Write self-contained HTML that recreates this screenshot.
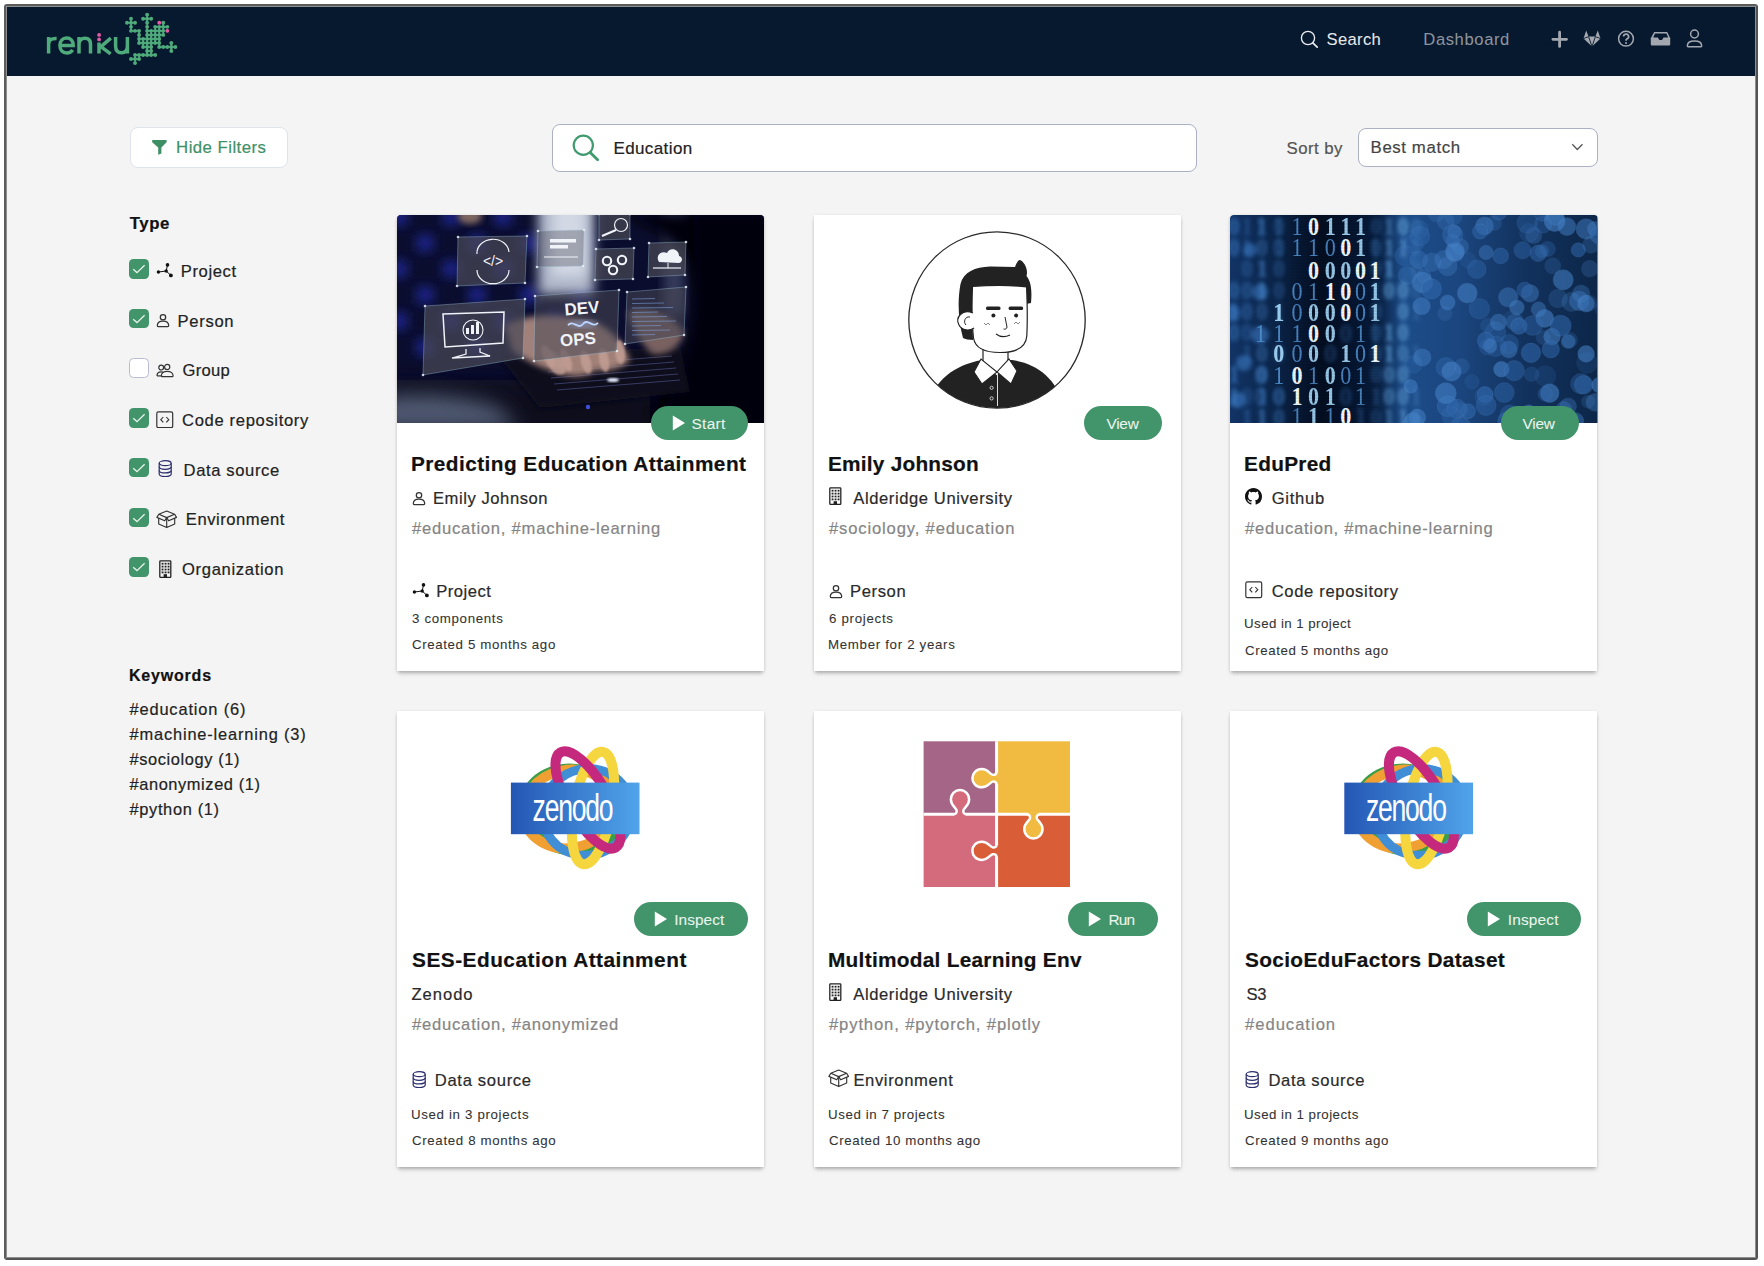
<!DOCTYPE html><html><head><meta charset="utf-8"><style>
*{box-sizing:border-box}
html,body{margin:0;padding:0;width:1764px;height:1266px;overflow:hidden;background:#fff;font-family:"Liberation Sans",sans-serif}
.t{position:absolute;white-space:nowrap;line-height:1;-webkit-text-stroke:0.2px currentColor}
.a{position:absolute;display:block}
.frame{position:absolute;left:4px;top:4px;width:1754px;height:1256px;border:2px solid #5c5c5c;border-right-color:#525252;border-bottom-color:#525252;border-radius:3px;background:#f4f4f4}
.inner{position:absolute;left:0;top:0;right:0;bottom:0;border:1px solid #8e8e8e}
.nav{position:absolute;left:7px;top:7px;width:1748px;height:69px;background:#07192e}
.card{position:absolute;width:367px;height:456px;background:#fff;box-shadow:0 3px 4px -1px rgba(0,0,0,0.30),0 0 3px rgba(0,0,0,0.07)}
.btn{position:absolute;height:34.2px;border-radius:17.1px;background:#42946a}
.cb{position:absolute;left:129px;width:19.5px;height:19.5px;border-radius:4.5px;background:#42946a}
.cbo{position:absolute;left:129px;width:19.5px;height:19.5px;border-radius:4.5px;background:#fff;border:1.3px solid #b9bdd0}
</style></head><body><div class="frame"><div class="inner"></div></div>
<div class="nav"></div>
<svg class="a" style="left:40px;top:8px" width="145" height="62" viewBox="40 8 145 62"><path d="M48.6 37 V53.6 M48.6 44.6 C48.6 40 51.5 38.2 56.6 38.4" fill="none" stroke="#4fab7b" stroke-width="3.5"/><path d="M60.2 45.4 H73.2 C73.2 40.6 70.4 38.1 66.6 38.1 C62.6 38.1 59.9 41.2 59.9 45.6 C59.9 50.2 62.8 52.9 66.8 52.9 C69.4 52.9 71.4 51.8 72.6 49.8" fill="none" stroke="#4fab7b" stroke-width="3.5"/><path d="M79.0 37 V53.6 M79.0 44.6 C79.0 40.2 81.6 38.2 84.9 38.2 C88.4 38.2 90.5 40.4 90.5 44.2 V53.6" fill="none" stroke="#4fab7b" stroke-width="3.5"/><path d="M99.0 42.6 V53.6 M110.8 38.2 L101.0 46.6 L110.6 53.8" fill="none" stroke="#4fab7b" stroke-width="3.5"/><path d="M115.6 37 V46.0 C115.6 50.4 117.9 52.8 121.4 52.8 C125.0 52.8 127.4 50.4 127.4 46.0 M127.4 37 V53.6" fill="none" stroke="#4fab7b" stroke-width="3.5"/><circle cx="99.1" cy="34.9" r="1.9" fill="#e65aa6"/><circle cx="99.1" cy="39.4" r="1.9" fill="#e65aa6"/><line x1="139.07" y1="30.86" x2="139.07" y2="34.89" stroke="#4fab7b" stroke-width="1.7"/><line x1="131.01" y1="26.83" x2="131.01" y2="30.86" stroke="#4fab7b" stroke-width="1.7"/><line x1="155.19" y1="26.83" x2="159.22" y2="26.83" stroke="#4fab7b" stroke-width="1.7"/><line x1="155.19" y1="26.83" x2="155.19" y2="30.86" stroke="#4fab7b" stroke-width="1.7"/><line x1="163.25" y1="30.86" x2="163.25" y2="34.89" stroke="#4fab7b" stroke-width="1.7"/><line x1="151.16" y1="30.86" x2="155.19" y2="30.86" stroke="#4fab7b" stroke-width="1.7"/><line x1="151.16" y1="30.86" x2="151.16" y2="34.89" stroke="#4fab7b" stroke-width="1.7"/><line x1="155.19" y1="34.89" x2="159.22" y2="34.89" stroke="#4fab7b" stroke-width="1.7"/><line x1="155.19" y1="34.89" x2="155.19" y2="38.92" stroke="#4fab7b" stroke-width="1.7"/><line x1="147.13" y1="51.01" x2="151.16" y2="51.01" stroke="#4fab7b" stroke-width="1.7"/><line x1="147.13" y1="51.01" x2="147.13" y2="55.04" stroke="#4fab7b" stroke-width="1.7"/><line x1="135.04" y1="59.07" x2="139.07" y2="59.07" stroke="#4fab7b" stroke-width="1.7"/><line x1="135.04" y1="59.07" x2="135.04" y2="63.10" stroke="#4fab7b" stroke-width="1.7"/><line x1="163.25" y1="46.98" x2="167.28" y2="46.98" stroke="#4fab7b" stroke-width="1.7"/><line x1="151.16" y1="55.04" x2="155.19" y2="55.04" stroke="#4fab7b" stroke-width="1.7"/><line x1="147.13" y1="14.74" x2="147.13" y2="18.77" stroke="#4fab7b" stroke-width="1.7"/><line x1="151.16" y1="46.98" x2="151.16" y2="51.01" stroke="#4fab7b" stroke-width="1.7"/><line x1="147.13" y1="22.80" x2="147.13" y2="26.83" stroke="#4fab7b" stroke-width="1.7"/><line x1="139.07" y1="55.04" x2="143.10" y2="55.04" stroke="#4fab7b" stroke-width="1.7"/><line x1="139.07" y1="55.04" x2="139.07" y2="59.07" stroke="#4fab7b" stroke-width="1.7"/><line x1="143.10" y1="42.95" x2="147.13" y2="42.95" stroke="#4fab7b" stroke-width="1.7"/><line x1="143.10" y1="42.95" x2="143.10" y2="46.98" stroke="#4fab7b" stroke-width="1.7"/><line x1="155.19" y1="42.95" x2="159.22" y2="42.95" stroke="#4fab7b" stroke-width="1.7"/><line x1="147.13" y1="38.92" x2="151.16" y2="38.92" stroke="#4fab7b" stroke-width="1.7"/><line x1="147.13" y1="38.92" x2="147.13" y2="42.95" stroke="#4fab7b" stroke-width="1.7"/><line x1="159.22" y1="38.92" x2="159.22" y2="42.95" stroke="#4fab7b" stroke-width="1.7"/><line x1="135.04" y1="30.86" x2="139.07" y2="30.86" stroke="#4fab7b" stroke-width="1.7"/><line x1="147.13" y1="30.86" x2="151.16" y2="30.86" stroke="#4fab7b" stroke-width="1.7"/><line x1="147.13" y1="30.86" x2="147.13" y2="34.89" stroke="#4fab7b" stroke-width="1.7"/><line x1="163.25" y1="26.83" x2="167.28" y2="26.83" stroke="#4fab7b" stroke-width="1.7"/><line x1="163.25" y1="26.83" x2="163.25" y2="30.86" stroke="#4fab7b" stroke-width="1.7"/><line x1="151.16" y1="34.89" x2="155.19" y2="34.89" stroke="#4fab7b" stroke-width="1.7"/><line x1="151.16" y1="34.89" x2="151.16" y2="38.92" stroke="#4fab7b" stroke-width="1.7"/><line x1="159.22" y1="30.86" x2="163.25" y2="30.86" stroke="#4fab7b" stroke-width="1.7"/><line x1="159.22" y1="30.86" x2="159.22" y2="34.89" stroke="#4fab7b" stroke-width="1.7"/><line x1="139.07" y1="34.89" x2="139.07" y2="38.92" stroke="#4fab7b" stroke-width="1.7"/><line x1="147.13" y1="46.98" x2="151.16" y2="46.98" stroke="#4fab7b" stroke-width="1.7"/><line x1="147.13" y1="46.98" x2="147.13" y2="51.01" stroke="#4fab7b" stroke-width="1.7"/><line x1="171.31" y1="46.98" x2="175.34" y2="46.98" stroke="#4fab7b" stroke-width="1.7"/><line x1="171.31" y1="46.98" x2="171.31" y2="51.01" stroke="#4fab7b" stroke-width="1.7"/><line x1="135.04" y1="55.04" x2="139.07" y2="55.04" stroke="#4fab7b" stroke-width="1.7"/><line x1="135.04" y1="55.04" x2="135.04" y2="59.07" stroke="#4fab7b" stroke-width="1.7"/><line x1="131.01" y1="59.07" x2="135.04" y2="59.07" stroke="#4fab7b" stroke-width="1.7"/><line x1="159.22" y1="46.98" x2="163.25" y2="46.98" stroke="#4fab7b" stroke-width="1.7"/><line x1="147.13" y1="55.04" x2="151.16" y2="55.04" stroke="#4fab7b" stroke-width="1.7"/><line x1="131.01" y1="22.80" x2="135.04" y2="22.80" stroke="#4fab7b" stroke-width="1.7"/><line x1="131.01" y1="22.80" x2="131.01" y2="26.83" stroke="#4fab7b" stroke-width="1.7"/><line x1="147.13" y1="18.77" x2="151.16" y2="18.77" stroke="#4fab7b" stroke-width="1.7"/><line x1="147.13" y1="18.77" x2="147.13" y2="22.80" stroke="#4fab7b" stroke-width="1.7"/><line x1="143.10" y1="38.92" x2="147.13" y2="38.92" stroke="#4fab7b" stroke-width="1.7"/><line x1="143.10" y1="38.92" x2="143.10" y2="42.95" stroke="#4fab7b" stroke-width="1.7"/><line x1="139.07" y1="42.95" x2="143.10" y2="42.95" stroke="#4fab7b" stroke-width="1.7"/><line x1="155.19" y1="38.92" x2="159.22" y2="38.92" stroke="#4fab7b" stroke-width="1.7"/><line x1="155.19" y1="38.92" x2="155.19" y2="42.95" stroke="#4fab7b" stroke-width="1.7"/><line x1="151.16" y1="42.95" x2="155.19" y2="42.95" stroke="#4fab7b" stroke-width="1.7"/><line x1="151.16" y1="42.95" x2="151.16" y2="46.98" stroke="#4fab7b" stroke-width="1.7"/><line x1="131.01" y1="30.86" x2="135.04" y2="30.86" stroke="#4fab7b" stroke-width="1.7"/><line x1="155.19" y1="30.86" x2="159.22" y2="30.86" stroke="#4fab7b" stroke-width="1.7"/><line x1="155.19" y1="30.86" x2="155.19" y2="34.89" stroke="#4fab7b" stroke-width="1.7"/><line x1="147.13" y1="26.83" x2="147.13" y2="30.86" stroke="#4fab7b" stroke-width="1.7"/><line x1="159.22" y1="26.83" x2="163.25" y2="26.83" stroke="#4fab7b" stroke-width="1.7"/><line x1="159.22" y1="26.83" x2="159.22" y2="30.86" stroke="#4fab7b" stroke-width="1.7"/><line x1="147.13" y1="34.89" x2="151.16" y2="34.89" stroke="#4fab7b" stroke-width="1.7"/><line x1="147.13" y1="34.89" x2="147.13" y2="38.92" stroke="#4fab7b" stroke-width="1.7"/><line x1="143.10" y1="46.98" x2="147.13" y2="46.98" stroke="#4fab7b" stroke-width="1.7"/><line x1="159.22" y1="34.89" x2="163.25" y2="34.89" stroke="#4fab7b" stroke-width="1.7"/><line x1="159.22" y1="34.89" x2="159.22" y2="38.92" stroke="#4fab7b" stroke-width="1.7"/><line x1="143.10" y1="55.04" x2="147.13" y2="55.04" stroke="#4fab7b" stroke-width="1.7"/><line x1="131.01" y1="18.77" x2="131.01" y2="22.80" stroke="#4fab7b" stroke-width="1.7"/><line x1="151.16" y1="51.01" x2="151.16" y2="55.04" stroke="#4fab7b" stroke-width="1.7"/><line x1="126.98" y1="22.80" x2="131.01" y2="22.80" stroke="#4fab7b" stroke-width="1.7"/><line x1="167.28" y1="46.98" x2="171.31" y2="46.98" stroke="#4fab7b" stroke-width="1.7"/><line x1="143.10" y1="18.77" x2="147.13" y2="18.77" stroke="#4fab7b" stroke-width="1.7"/><line x1="171.31" y1="42.95" x2="171.31" y2="46.98" stroke="#4fab7b" stroke-width="1.7"/><line x1="163.25" y1="22.80" x2="163.25" y2="26.83" stroke="#4fab7b" stroke-width="1.7"/><line x1="151.16" y1="38.92" x2="155.19" y2="38.92" stroke="#4fab7b" stroke-width="1.7"/><line x1="151.16" y1="38.92" x2="151.16" y2="42.95" stroke="#4fab7b" stroke-width="1.7"/><line x1="147.13" y1="42.95" x2="151.16" y2="42.95" stroke="#4fab7b" stroke-width="1.7"/><line x1="147.13" y1="42.95" x2="147.13" y2="46.98" stroke="#4fab7b" stroke-width="1.7"/><line x1="139.07" y1="38.92" x2="143.10" y2="38.92" stroke="#4fab7b" stroke-width="1.7"/><line x1="139.07" y1="38.92" x2="139.07" y2="42.95" stroke="#4fab7b" stroke-width="1.7"/><line x1="159.22" y1="42.95" x2="159.22" y2="46.98" stroke="#4fab7b" stroke-width="1.7"/><circle cx="139.07" cy="30.86" r="1.95" fill="#4fab7b"/><circle cx="131.01" cy="26.83" r="1.95" fill="#4fab7b"/><circle cx="155.19" cy="26.83" r="1.95" fill="#4fab7b"/><circle cx="163.25" cy="30.86" r="1.95" fill="#4fab7b"/><circle cx="151.16" cy="30.86" r="1.95" fill="#4fab7b"/><circle cx="167.28" cy="26.83" r="1.95" fill="#4fab7b"/><circle cx="155.19" cy="34.89" r="1.95" fill="#4fab7b"/><circle cx="147.13" cy="51.01" r="1.95" fill="#4fab7b"/><circle cx="135.04" cy="59.07" r="1.95" fill="#4fab7b"/><circle cx="163.25" cy="46.98" r="1.95" fill="#4fab7b"/><circle cx="151.16" cy="55.04" r="1.95" fill="#4fab7b"/><circle cx="147.13" cy="14.74" r="1.95" fill="#4fab7b"/><circle cx="135.04" cy="22.80" r="1.95" fill="#4fab7b"/><circle cx="151.16" cy="46.98" r="1.95" fill="#4fab7b"/><circle cx="151.16" cy="18.77" r="1.95" fill="#4fab7b"/><circle cx="175.34" cy="46.98" r="1.95" fill="#4fab7b"/><circle cx="147.13" cy="22.80" r="1.95" fill="#4fab7b"/><circle cx="171.31" cy="51.01" r="1.95" fill="#4fab7b"/><circle cx="139.07" cy="55.04" r="1.95" fill="#4fab7b"/><circle cx="159.22" cy="22.80" r="1.95" fill="#e65aa6"/><circle cx="143.10" cy="42.95" r="1.95" fill="#4fab7b"/><circle cx="155.19" cy="42.95" r="1.95" fill="#4fab7b"/><circle cx="147.13" cy="38.92" r="1.95" fill="#4fab7b"/><circle cx="159.22" cy="38.92" r="1.95" fill="#4fab7b"/><circle cx="135.04" cy="30.86" r="1.95" fill="#4fab7b"/><circle cx="147.13" cy="30.86" r="1.95" fill="#4fab7b"/><circle cx="163.25" cy="26.83" r="1.95" fill="#4fab7b"/><circle cx="151.16" cy="34.89" r="1.95" fill="#4fab7b"/><circle cx="159.22" cy="30.86" r="1.95" fill="#4fab7b"/><circle cx="139.07" cy="34.89" r="1.95" fill="#4fab7b"/><circle cx="163.25" cy="34.89" r="1.95" fill="#4fab7b"/><circle cx="147.13" cy="46.98" r="1.95" fill="#4fab7b"/><circle cx="171.31" cy="46.98" r="1.95" fill="#4fab7b"/><circle cx="135.04" cy="55.04" r="1.95" fill="#4fab7b"/><circle cx="131.01" cy="59.07" r="1.95" fill="#4fab7b"/><circle cx="159.22" cy="46.98" r="1.95" fill="#4fab7b"/><circle cx="147.13" cy="55.04" r="1.95" fill="#4fab7b"/><circle cx="131.01" cy="22.80" r="1.95" fill="#4fab7b"/><circle cx="147.13" cy="18.77" r="1.95" fill="#4fab7b"/><circle cx="143.10" cy="38.92" r="1.95" fill="#4fab7b"/><circle cx="139.07" cy="42.95" r="1.95" fill="#4fab7b"/><circle cx="155.19" cy="38.92" r="1.95" fill="#4fab7b"/><circle cx="151.16" cy="42.95" r="1.95" fill="#4fab7b"/><circle cx="135.04" cy="63.10" r="1.95" fill="#4fab7b"/><circle cx="131.01" cy="30.86" r="1.95" fill="#4fab7b"/><circle cx="155.19" cy="30.86" r="1.95" fill="#4fab7b"/><circle cx="147.13" cy="26.83" r="1.95" fill="#4fab7b"/><circle cx="167.28" cy="30.86" r="1.95" fill="#e65aa6"/><circle cx="159.22" cy="26.83" r="1.95" fill="#4fab7b"/><circle cx="147.13" cy="34.89" r="1.95" fill="#4fab7b"/><circle cx="143.10" cy="46.98" r="1.95" fill="#4fab7b"/><circle cx="159.22" cy="34.89" r="1.95" fill="#4fab7b"/><circle cx="143.10" cy="55.04" r="1.95" fill="#4fab7b"/><circle cx="131.01" cy="18.77" r="1.95" fill="#4fab7b"/><circle cx="151.16" cy="51.01" r="1.95" fill="#4fab7b"/><circle cx="126.98" cy="22.80" r="1.95" fill="#4fab7b"/><circle cx="167.28" cy="46.98" r="1.95" fill="#4fab7b"/><circle cx="143.10" cy="18.77" r="1.95" fill="#4fab7b"/><circle cx="171.31" cy="42.95" r="1.95" fill="#4fab7b"/><circle cx="155.19" cy="55.04" r="1.95" fill="#4fab7b"/><circle cx="163.25" cy="22.80" r="1.95" fill="#4fab7b"/><circle cx="139.07" cy="59.07" r="1.95" fill="#4fab7b"/><circle cx="151.16" cy="38.92" r="1.95" fill="#4fab7b"/><circle cx="147.13" cy="42.95" r="1.95" fill="#4fab7b"/><circle cx="139.07" cy="38.92" r="1.95" fill="#4fab7b"/><circle cx="159.22" cy="42.95" r="1.95" fill="#4fab7b"/></svg>
<svg class="a" style="left:1296px;top:27px" width="26" height="24" viewBox="0 0 26 24"><circle cx="12" cy="11" r="6.6" fill="none" stroke="#e9ebee" stroke-width="1.35"/><line x1="16.8" y1="15.8" x2="21.2" y2="20.2" stroke="#e9ebee" stroke-width="1.7" stroke-linecap="round"/></svg>
<div class="t" style="left:1326.50px;top:31.69px;font-size:16.6px;color:#e6e8eb;font-weight:400;letter-spacing:0.34px;-webkit-text-stroke:0.05px currentColor;">Search</div>
<div class="t" style="left:1423.30px;top:31.89px;font-size:16.6px;color:#8d949e;font-weight:400;letter-spacing:0.606px;-webkit-text-stroke:0.05px currentColor;">Dashboard</div>
<svg class="a" style="left:1550px;top:29px" width="20" height="20" viewBox="0 0 20 20"><path d="M9.6 3.2v14.2M2.9 10.3h13.6" stroke="#a3a8b0" stroke-width="2.8" stroke-linecap="round"/></svg>
<svg class="a" style="left:1582px;top:29px" width="20" height="20" viewBox="0 0 20 20"><path d="M4.2 1.5 L1.5 9.6 L10 17.6 L18.5 9.6 L15.8 1.5 L13.4 7.6 H6.6 Z" fill="#a3a8b0"/><path d="M6.6 7.6 L10 17.6 L13.4 7.6 M1.5 9.6 L6.6 7.6 M18.5 9.6 L13.4 7.6" stroke="#07192e" stroke-width="0.9" fill="none"/></svg>
<svg class="a" style="left:1616px;top:29px" width="20" height="20" viewBox="0 0 20 20"><circle cx="10" cy="9.7" r="7.4" fill="none" stroke="#a3a8b0" stroke-width="1.5"/><path d="M7.6 7.6 a2.5 2.5 0 1 1 3.6 2.2 c-0.9 0.5 -1.2 1 -1.2 1.9" fill="none" stroke="#a3a8b0" stroke-width="1.7"/><circle cx="10" cy="13.9" r="1.0" fill="#a3a8b0"/></svg>
<svg class="a" style="left:1650px;top:29px" width="22" height="20" viewBox="0 0 22 20"><path d="M4.2 3 H17.2 L20.2 9.2 V15.6 a0.8 0.8 0 0 1 -0.8 0.8 H1.6 a0.8 0.8 0 0 1 -0.8 -0.8 V9.2 Z" fill="#a3a8b0"/><path d="M5 4.6 H16.4 L18.2 8.6 H13.6 L12 11 H9.4 L7.8 8.6 H3.2 Z" fill="#07192e"/></svg>
<svg class="a" style="left:1685px;top:28px" width="20" height="21" viewBox="0 0 20 21"><circle cx="9.5" cy="6" r="3.9" fill="none" stroke="#a3a8b0" stroke-width="1.5"/><path d="M2.4 17.5 c0-3 2.8-4.6 7.1-4.6 s7.1 1.6 7.1 4.6 v0.6 a0.6 0.6 0 0 1 -0.6 0.6 H3 a0.6 0.6 0 0 1 -0.6 -0.6 Z" fill="none" stroke="#a3a8b0" stroke-width="1.5"/></svg>
<div class="a" style="left:129.5px;top:127px;width:158px;height:40.5px;background:#fff;border:1.2px solid #dfe3ec;border-radius:8px"></div>
<svg class="a" style="left:151px;top:139px" width="17" height="17" viewBox="0 0 17 17"><path d="M1.2 1 H15.6 V3.2 L10.4 8.6 V14.6 L7.2 15.8 V8.6 L1.2 3.2 Z" fill="#3f8f66"/></svg>
<div class="t" style="left:176.10px;top:140.02px;font-size:16.8px;color:#3f9167;font-weight:400;letter-spacing:0.448px;">Hide Filters</div>
<div class="a" style="left:552px;top:124px;width:645px;height:48px;background:#fff;border:1.5px solid #abb0c3;border-radius:8px"></div>
<svg class="a" style="left:568px;top:131px" width="36" height="34" viewBox="0 0 36 34"><circle cx="15.3" cy="14.3" r="9.6" fill="none" stroke="#3f9a6e" stroke-width="2.2"/><line x1="22.2" y1="21.4" x2="29.6" y2="28.8" stroke="#3f9a6e" stroke-width="2.8" stroke-linecap="round"/></svg>
<div class="t" style="left:613.40px;top:140.25px;font-size:17px;color:#222;font-weight:400;letter-spacing:0.4px;">Education</div>
<div class="t" style="left:1286.50px;top:140.62px;font-size:16.8px;color:#555;font-weight:400;letter-spacing:0.468px;">Sort by</div>
<div class="a" style="left:1357.5px;top:128px;width:240px;height:38.7px;background:#fff;border:1.3px solid #abb0c3;border-radius:8px"></div>
<div class="t" style="left:1370.60px;top:140.42px;font-size:16.8px;color:#444;font-weight:400;letter-spacing:0.607px;">Best match</div>
<svg class="a" style="left:1570px;top:141px" width="15" height="12" viewBox="0 0 15 12"><path d="M2.3 3.3 L7.3 8.5 L12.5 3.3" fill="none" stroke="#555" stroke-width="1.3"/></svg>
<div class="t" style="left:129.80px;top:216.32px;font-size:16.8px;color:#111;font-weight:700;letter-spacing:0.498px;">Type</div>
<div class="cb" style="top:259.00px"></div>
<svg class="a" style="left:129px;top:259.00px" width="20" height="20" viewBox="0 0 20 20"><path d="M4.2 10.2 L8 13.6 L15.6 6.2" fill="none" stroke="#e8f4ec" stroke-width="1.3"/></svg>
<svg class="a" style="left:156.30px;top:263.40px" width="18" height="15" viewBox="0 0 18 15"><path d="M2.4 9.0 L10.2 8.0 L11.5 1.9 M10.2 8.0 L14.9 12.4" stroke="#111" stroke-width="1.0" fill="none"/><circle cx="2.4" cy="9.0" r="1.7" fill="#111"/><circle cx="10.2" cy="8.0" r="1.7" fill="#111"/><circle cx="11.5" cy="1.9" r="1.8" fill="#111"/><circle cx="14.9" cy="12.4" r="1.9" fill="#111"/></svg>
<div class="t" style="left:180.80px;top:263.99px;font-size:16.6px;color:#222;font-weight:400;letter-spacing:0.602px;">Project</div>
<div class="cb" style="top:308.70px"></div>
<svg class="a" style="left:129px;top:308.70px" width="20" height="20" viewBox="0 0 20 20"><path d="M4.2 10.2 L8 13.6 L15.6 6.2" fill="none" stroke="#e8f4ec" stroke-width="1.3"/></svg>
<svg class="a" style="left:155.50px;top:312.80px" width="15" height="15" viewBox="0 0 15 15"><g transform="scale(1.0)"><circle cx="7" cy="4.2" r="2.7" fill="none" stroke="#333" stroke-width="1.25"/><path d="M1.3 12.6 c0-3 2.6-4.6 5.7-4.6 s5.7 1.6 5.7 4.6 c0 0.6-0.4 0.9-0.9 0.9 H2.2 c-0.5 0-0.9-0.3-0.9-0.9 Z" fill="none" stroke="#333" stroke-width="1.25"/></g></svg>
<div class="t" style="left:177.50px;top:313.69px;font-size:16.6px;color:#222;font-weight:400;letter-spacing:0.7px;">Person</div>
<div class="cbo" style="top:358.40px"></div>
<svg class="a" style="left:155.50px;top:362.50px" width="19" height="15" viewBox="0 0 19 15"><circle cx="5.2" cy="4.6" r="2.4" fill="none" stroke="#333" stroke-width="1.2"/><circle cx="11.2" cy="3.9" r="2.6" fill="none" stroke="#333" stroke-width="1.2"/><path d="M1.0 12.9 c0-2.4 1.6-4 4.2-4 c1.0 0 1.8 0.2 2.4 0.6" fill="none" stroke="#333" stroke-width="1.2"/><path d="M1.0 12.9 H6.2" stroke="#333" stroke-width="1.2"/><path d="M5.3 13.1 c0-3 2.6-4.8 5.9-4.8 s5.9 1.8 5.9 4.8 c0 0.3-0.2 0.5-0.5 0.5 H5.8 c-0.3 0-0.5-0.2-0.5-0.5 Z" fill="none" stroke="#333" stroke-width="1.2"/></svg>
<div class="t" style="left:182.50px;top:363.39px;font-size:16.6px;color:#222;font-weight:400;letter-spacing:0.3px;">Group</div>
<div class="cb" style="top:408.10px"></div>
<svg class="a" style="left:129px;top:408.10px" width="20" height="20" viewBox="0 0 20 20"><path d="M4.2 10.2 L8 13.6 L15.6 6.2" fill="none" stroke="#e8f4ec" stroke-width="1.3"/></svg>
<svg class="a" style="left:156.10px;top:410.95px" width="17.5" height="17.5" viewBox="0 0 17.5 17.5"><rect x="0.8" y="0.8" width="15.9" height="15.9" rx="1.6" fill="none" stroke="#333" stroke-width="1.2"/><path d="M7.3 6.0 L4.8 8.7 L7.3 11.4 M10.3 6.0 L12.8 8.7 L10.3 11.4" fill="none" stroke="#333" stroke-width="1.1"/></svg>
<div class="t" style="left:182.10px;top:413.09px;font-size:16.6px;color:#222;font-weight:400;letter-spacing:0.644px;">Code repository</div>
<div class="cb" style="top:457.80px"></div>
<svg class="a" style="left:129px;top:457.80px" width="20" height="20" viewBox="0 0 20 20"><path d="M4.2 10.2 L8 13.6 L15.6 6.2" fill="none" stroke="#e8f4ec" stroke-width="1.3"/></svg>
<svg class="a" style="left:158.00px;top:460.40px" width="15" height="18" viewBox="0 0 15 18"><ellipse cx="7.2" cy="3.2" rx="6.0" ry="2.5" fill="none" stroke="#2c2f6e" stroke-width="1.2"/><path d="M1.2 3.2 V14 c0 1.4 2.7 2.5 6 2.5 s6-1.1 6-2.5 V3.2" fill="none" stroke="#2c2f6e" stroke-width="1.2"/><path d="M1.2 6.8 c0 1.4 2.7 2.5 6 2.5 s6-1.1 6-2.5 M1.2 10.4 c0 1.4 2.7 2.5 6 2.5 s6-1.1 6-2.5" fill="none" stroke="#2c2f6e" stroke-width="1.2"/></svg>
<div class="t" style="left:183.60px;top:462.79px;font-size:16.6px;color:#222;font-weight:400;letter-spacing:0.62px;">Data source</div>
<div class="cb" style="top:507.50px"></div>
<svg class="a" style="left:129px;top:507.50px" width="20" height="20" viewBox="0 0 20 20"><path d="M4.2 10.2 L8 13.6 L15.6 6.2" fill="none" stroke="#e8f4ec" stroke-width="1.3"/></svg>
<svg class="a" style="left:156.20px;top:509.60px" width="22" height="19" viewBox="0 0 22 19"><path d="M10.7 1.0 L18.6 4.2 L10.7 7.6 L2.8 4.2 Z" fill="none" stroke="#333" stroke-width="1.15" stroke-linejoin="round"/><path d="M2.8 4.2 L0.9 7.4 L8.7 10.8 L10.7 7.6 L12.7 10.8 L20.5 7.4 L18.6 4.2" fill="none" stroke="#333" stroke-width="1.15" stroke-linejoin="round"/><path d="M2.7 8.2 V13.9 L10.7 17.6 L18.7 13.9 V8.2 M10.7 7.6 V17.6" fill="none" stroke="#333" stroke-width="1.15" stroke-linejoin="round"/></svg>
<div class="t" style="left:185.80px;top:512.49px;font-size:16.6px;color:#222;font-weight:400;letter-spacing:0.54px;">Environment</div>
<div class="cb" style="top:557.20px"></div>
<svg class="a" style="left:129px;top:557.20px" width="20" height="20" viewBox="0 0 20 20"><path d="M4.2 10.2 L8 13.6 L15.6 6.2" fill="none" stroke="#e8f4ec" stroke-width="1.3"/></svg>
<svg class="a" style="left:158.60px;top:559.80px" width="13" height="18" viewBox="0 0 13 18"><rect x="0.8" y="0.8" width="11" height="16.6" rx="0.8" fill="none" stroke="#222" stroke-width="1.3"/><rect x="2.6" y="2.8" width="1.9" height="1.8" fill="#222"/><rect x="2.6" y="5.7" width="1.9" height="1.8" fill="#222"/><rect x="2.6" y="8.6" width="1.9" height="1.8" fill="#222"/><rect x="2.6" y="11.5" width="1.9" height="1.8" fill="#222"/><rect x="5.6" y="2.8" width="1.9" height="1.8" fill="#222"/><rect x="5.6" y="5.7" width="1.9" height="1.8" fill="#222"/><rect x="5.6" y="8.6" width="1.9" height="1.8" fill="#222"/><rect x="5.6" y="11.5" width="1.9" height="1.8" fill="#222"/><rect x="8.6" y="2.8" width="1.9" height="1.8" fill="#222"/><rect x="8.6" y="5.7" width="1.9" height="1.8" fill="#222"/><rect x="8.6" y="8.6" width="1.9" height="1.8" fill="#222"/><rect x="8.6" y="11.5" width="1.9" height="1.8" fill="#222"/><rect x="4.6" y="14.2" width="3.4" height="3" fill="#222"/></svg>
<div class="t" style="left:182.00px;top:562.19px;font-size:16.6px;color:#222;font-weight:400;letter-spacing:0.663px;">Organization</div>
<div class="t" style="left:128.90px;top:668.20px;font-size:16.0px;color:#111;font-weight:700;letter-spacing:0.81px;">Keywords</div>
<div class="t" style="left:129.50px;top:700.86px;font-size:16.4px;color:#222;font-weight:400;letter-spacing:0.852px;">#education (6)</div>
<div class="t" style="left:129.50px;top:725.96px;font-size:16.4px;color:#222;font-weight:400;letter-spacing:0.84px;">#machine-learning (3)</div>
<div class="t" style="left:129.50px;top:751.06px;font-size:16.4px;color:#222;font-weight:400;letter-spacing:0.608px;">#sociology (1)</div>
<div class="t" style="left:129.50px;top:776.16px;font-size:16.4px;color:#222;font-weight:400;letter-spacing:0.598px;">#anonymized (1)</div>
<div class="t" style="left:129.50px;top:801.26px;font-size:16.4px;color:#222;font-weight:400;letter-spacing:0.66px;">#python (1)</div>
<div class="card" style="left:397px;top:215px"></div>
<svg class="a" style="left:397px;top:215px;border-radius:4px 4px 0 0" width="367" height="208" viewBox="397 215 367 208"><defs><filter id="b3" x="-20%" y="-20%" width="140%" height="140%"><feGaussianBlur stdDeviation="3"/></filter><filter id="b6" x="-30%" y="-30%" width="160%" height="160%"><feGaussianBlur stdDeviation="6"/></filter><filter id="b10" x="-50%" y="-50%" width="200%" height="200%"><feGaussianBlur stdDeviation="10"/></filter><filter id="b1" x="-10%" y="-10%" width="120%" height="120%"><feGaussianBlur stdDeviation="1.2"/></filter></defs><rect x="397" y="215" width="367" height="208" fill="#0b0d2e"/><g filter="url(#b6)"><rect x="391" y="209" width="16" height="16" fill="#1a2590"/><rect x="391" y="261" width="16" height="16" fill="#1a2590"/><rect x="391" y="313" width="16" height="16" fill="#1a2590"/><rect x="417" y="235" width="16" height="16" fill="#1a2590"/><rect x="417" y="287" width="16" height="16" fill="#1a2590"/><rect x="417" y="339" width="16" height="16" fill="#1a2590"/><rect x="443" y="209" width="16" height="16" fill="#1a2590"/><rect x="443" y="261" width="16" height="16" fill="#1a2590"/><rect x="443" y="313" width="16" height="16" fill="#1a2590"/><rect x="469" y="235" width="16" height="16" fill="#1a2590"/><rect x="469" y="287" width="16" height="16" fill="#1a2590"/><rect x="469" y="339" width="16" height="16" fill="#1a2590"/><rect x="495" y="209" width="16" height="16" fill="#1a2590"/><rect x="495" y="261" width="16" height="16" fill="#1a2590"/><rect x="495" y="313" width="16" height="16" fill="#1a2590"/><rect x="521" y="235" width="16" height="16" fill="#1a2590"/><rect x="521" y="287" width="16" height="16" fill="#1a2590"/><rect x="521" y="339" width="16" height="16" fill="#1a2590"/><rect x="547" y="209" width="16" height="16" fill="#1a2590"/><rect x="547" y="261" width="16" height="16" fill="#1a2590"/><rect x="547" y="313" width="16" height="16" fill="#1a2590"/><rect x="573" y="235" width="16" height="16" fill="#1a2590"/><rect x="573" y="287" width="16" height="16" fill="#1a2590"/><rect x="573" y="339" width="16" height="16" fill="#1a2590"/></g><ellipse cx="470" cy="216" rx="12" ry="8" fill="#a08070" filter="url(#b3)" opacity="0.8"/><rect x="538" y="200" width="56" height="95" fill="#aeb6c8" filter="url(#b6)"/><rect x="552" y="205" width="34" height="72" fill="#d2d8e4" filter="url(#b6)"/><rect x="664" y="205" width="20" height="110" fill="#4a5070" filter="url(#b6)" opacity="0.7"/><path d="M600 214 H764 V423 H600 C660 400 690 360 700 320 C705 280 690 240 620 214 Z" fill="#05060f" filter="url(#b6)"/><path d="M692 214 H770 V430 H640 C690 390 700 330 692 214 Z" fill="#020308" filter="url(#b6)"/><rect x="390" y="380" width="260" height="60" fill="#080a1c" filter="url(#b10)"/><path d="M380 398 C420 390 470 396 500 408 L520 430 H380 Z" fill="#4f5a72" filter="url(#b10)"/><path d="M500 358 L680 346 L690 392 L540 408 Z" fill="#0c0c1a" filter="url(#b3)"/><line x1="545" y1="366" x2="672" y2="356" stroke="#5a5f9a" stroke-width="1.1" opacity="0.55"/><line x1="548" y1="372" x2="674" y2="362" stroke="#5a5f9a" stroke-width="1.1" opacity="0.55"/><line x1="551" y1="378" x2="676" y2="368" stroke="#5a5f9a" stroke-width="1.1" opacity="0.55"/><line x1="554" y1="384" x2="678" y2="374" stroke="#5a5f9a" stroke-width="1.1" opacity="0.55"/><line x1="557" y1="390" x2="680" y2="380" stroke="#5a5f9a" stroke-width="1.1" opacity="0.55"/><ellipse cx="613" cy="380" rx="6" ry="2" fill="#e8ecff" filter="url(#b1)"/><g filter="url(#b3)" opacity="0.95"><path d="M505 325 C530 312 565 315 590 320 C608 326 622 340 630 360 C620 370 606 372 596 370 C585 378 570 378 556 372 C540 368 525 360 512 350 Z" fill="#a9877d"/><path d="M628 312 C650 305 672 314 684 332 C680 350 664 356 652 354 C642 344 634 332 628 312 Z" fill="#7f6663"/></g><ellipse cx="548" cy="356" rx="5" ry="12" fill="#c29e94" opacity="0.85" transform="rotate(-25 548 356)" filter="url(#b1)"/><ellipse cx="566" cy="360" rx="5" ry="12" fill="#c29e94" opacity="0.85" transform="rotate(-20 566 360)" filter="url(#b1)"/><ellipse cx="586" cy="362" rx="5" ry="12" fill="#c29e94" opacity="0.85" transform="rotate(-15 586 362)" filter="url(#b1)"/><ellipse cx="604" cy="360" rx="5" ry="12" fill="#c29e94" opacity="0.85" transform="rotate(-10 604 360)" filter="url(#b1)"/><ellipse cx="620" cy="352" rx="5" ry="12" fill="#c29e94" opacity="0.85" transform="rotate(-5 620 352)" filter="url(#b1)"/><path d="M548 350 C556 350 566 362 566 372 C560 378 552 374 548 364 Z" fill="#bf9d93" opacity="0.8" filter="url(#b1)"/><path d="M458.0 237.0 L527.0 236.0 L525.0 283.0 L457.0 286.0 Z" fill="#484856" fill-opacity="0.72" stroke="#9fc4d8" stroke-width="0.7" stroke-opacity="0.55"/><circle cx="458.0" cy="237.0" r="1.3" fill="#e6eef5" opacity="0.85"/><circle cx="527.0" cy="236.0" r="1.3" fill="#e6eef5" opacity="0.85"/><circle cx="525.0" cy="283.0" r="1.3" fill="#e6eef5" opacity="0.85"/><circle cx="457.0" cy="286.0" r="1.3" fill="#e6eef5" opacity="0.85"/><path d="M538.0 231.0 L584.0 230.0 L583.0 266.0 L537.0 267.0 Z" fill="#484856" fill-opacity="0.35" stroke="#9fc4d8" stroke-width="0.7" stroke-opacity="0.55"/><circle cx="538.0" cy="231.0" r="1.3" fill="#e6eef5" opacity="0.85"/><circle cx="584.0" cy="230.0" r="1.3" fill="#e6eef5" opacity="0.85"/><circle cx="583.0" cy="266.0" r="1.3" fill="#e6eef5" opacity="0.85"/><circle cx="537.0" cy="267.0" r="1.3" fill="#e6eef5" opacity="0.85"/><path d="M599.0 214.0 L630.0 214.0 L630.0 239.0 L599.0 240.0 Z" fill="#484856" fill-opacity="0.72" stroke="#9fc4d8" stroke-width="0.7" stroke-opacity="0.55"/><circle cx="599.0" cy="214.0" r="1.3" fill="#e6eef5" opacity="0.85"/><circle cx="630.0" cy="214.0" r="1.3" fill="#e6eef5" opacity="0.85"/><circle cx="630.0" cy="239.0" r="1.3" fill="#e6eef5" opacity="0.85"/><circle cx="599.0" cy="240.0" r="1.3" fill="#e6eef5" opacity="0.85"/><path d="M596.0 249.0 L634.0 248.0 L633.0 279.0 L595.0 280.0 Z" fill="#484856" fill-opacity="0.72" stroke="#9fc4d8" stroke-width="0.7" stroke-opacity="0.55"/><circle cx="596.0" cy="249.0" r="1.3" fill="#e6eef5" opacity="0.85"/><circle cx="634.0" cy="248.0" r="1.3" fill="#e6eef5" opacity="0.85"/><circle cx="633.0" cy="279.0" r="1.3" fill="#e6eef5" opacity="0.85"/><circle cx="595.0" cy="280.0" r="1.3" fill="#e6eef5" opacity="0.85"/><path d="M649.0 243.0 L686.0 242.0 L685.0 275.0 L648.0 277.0 Z" fill="#484856" fill-opacity="0.72" stroke="#9fc4d8" stroke-width="0.7" stroke-opacity="0.55"/><circle cx="649.0" cy="243.0" r="1.3" fill="#e6eef5" opacity="0.85"/><circle cx="686.0" cy="242.0" r="1.3" fill="#e6eef5" opacity="0.85"/><circle cx="685.0" cy="275.0" r="1.3" fill="#e6eef5" opacity="0.85"/><circle cx="648.0" cy="277.0" r="1.3" fill="#e6eef5" opacity="0.85"/><path d="M425.0 306.0 L525.0 299.0 L523.0 358.0 L423.0 375.0 Z" fill="#484856" fill-opacity="0.72" stroke="#9fc4d8" stroke-width="0.7" stroke-opacity="0.55"/><circle cx="425.0" cy="306.0" r="1.3" fill="#e6eef5" opacity="0.85"/><circle cx="525.0" cy="299.0" r="1.3" fill="#e6eef5" opacity="0.85"/><circle cx="523.0" cy="358.0" r="1.3" fill="#e6eef5" opacity="0.85"/><circle cx="423.0" cy="375.0" r="1.3" fill="#e6eef5" opacity="0.85"/><path d="M535.0 296.0 L619.0 290.0 L617.0 351.0 L534.0 361.0 Z" fill="#484856" fill-opacity="0.55" stroke="#9fc4d8" stroke-width="0.7" stroke-opacity="0.55"/><circle cx="535.0" cy="296.0" r="1.3" fill="#e6eef5" opacity="0.85"/><circle cx="619.0" cy="290.0" r="1.3" fill="#e6eef5" opacity="0.85"/><circle cx="617.0" cy="351.0" r="1.3" fill="#e6eef5" opacity="0.85"/><circle cx="534.0" cy="361.0" r="1.3" fill="#e6eef5" opacity="0.85"/><path d="M627.0 292.0 L686.0 287.0 L684.0 335.0 L625.0 344.0 Z" fill="#484856" fill-opacity="0.55" stroke="#9fc4d8" stroke-width="0.7" stroke-opacity="0.55"/><circle cx="627.0" cy="292.0" r="1.3" fill="#e6eef5" opacity="0.85"/><circle cx="686.0" cy="287.0" r="1.3" fill="#e6eef5" opacity="0.85"/><circle cx="684.0" cy="335.0" r="1.3" fill="#e6eef5" opacity="0.85"/><circle cx="625.0" cy="344.0" r="1.3" fill="#e6eef5" opacity="0.85"/><path d="M477 254 A14 12 0 0 1 509 252 M509 270 A14 12 0 0 1 477 270" fill="none" stroke="#f0f3f8" stroke-width="1.2"/><text x="493" y="266" font-family="Liberation Sans" font-size="14" fill="#f0f3f8" text-anchor="middle">&lt;/&gt;</text><rect x="550" y="239" width="26" height="3.5" fill="#f0f3f8"/><rect x="550" y="245" width="18" height="3.5" fill="#f0f3f8"/><line x1="544" y1="257" x2="578" y2="257" stroke="#f0f3f8" stroke-width="1"/><circle cx="621" cy="225" r="6.5" fill="none" stroke="#f0f3f8" stroke-width="1.2"/><line x1="616" y1="230" x2="602" y2="236" stroke="#f0f3f8" stroke-width="2"/><circle cx="607" cy="261" r="4.2" fill="none" stroke="#f0f3f8" stroke-width="2.1"/><circle cx="622" cy="260" r="4.2" fill="none" stroke="#f0f3f8" stroke-width="2.1"/><circle cx="613" cy="270" r="4.2" fill="none" stroke="#f0f3f8" stroke-width="2.1"/><path d="M659 262 C655 256 661 250 667 253 C669 247 679 248 679 256 C683 257 683 262 679 263 Z" fill="#f0f3f8"/><line x1="668" y1="263" x2="668" y2="268" stroke="#f0f3f8"/><line x1="653" y1="268" x2="681" y2="268" stroke="#f0f3f8" stroke-width="1.2"/><path d="M443 314 L504 312 L503 343 L445 347 Z" fill="none" stroke="#f0f3f8" stroke-width="1.5"/><circle cx="473" cy="330" r="10" fill="none" stroke="#f0f3f8" stroke-width="1.1"/><rect x="466" y="328" width="3" height="6" fill="#f0f3f8"/><rect x="471" y="325" width="3" height="9" fill="#f0f3f8"/><rect x="476" y="322" width="3" height="12" fill="#f0f3f8"/><path d="M466 349 L466 354 L452 358 L490 356 L480 352 L480 348" fill="none" stroke="#f0f3f8" stroke-width="1.3"/><text x="582" y="314" font-family="Liberation Sans" font-weight="700" font-size="17" fill="#f0f3f8" text-anchor="middle" transform="rotate(-5 582 310)">DEV</text><text x="578" y="345" font-family="Liberation Sans" font-weight="700" font-size="17" fill="#f0f3f8" text-anchor="middle" transform="rotate(-5 578 340)">OPS</text><path d="M568 324 c5 -6 10 6 15 0 c5 -6 10 6 15 0 c-5 6 -10 -6 -15 0 c-5 6 -10 -6 -15 0 Z" fill="none" stroke="#c7dcff" stroke-width="1.8" transform="rotate(-5 583 324)"/><ellipse cx="583" cy="324" rx="14" ry="3" fill="#9fc0ff" opacity="0.5" filter="url(#b3)"/><line x1="632" y1="299.0" x2="655" y2="298.5" stroke="#7fa8e8" stroke-width="0.9" opacity="0.6"/><line x1="632" y1="303.5" x2="664" y2="303.0" stroke="#7fa8e8" stroke-width="0.9" opacity="0.6"/><line x1="632" y1="308.0" x2="673" y2="307.5" stroke="#7fa8e8" stroke-width="0.9" opacity="0.6"/><line x1="632" y1="312.5" x2="658" y2="312.0" stroke="#7fa8e8" stroke-width="0.9" opacity="0.6"/><line x1="632" y1="317.0" x2="667" y2="316.5" stroke="#7fa8e8" stroke-width="0.9" opacity="0.6"/><line x1="632" y1="321.5" x2="676" y2="321.0" stroke="#7fa8e8" stroke-width="0.9" opacity="0.6"/><line x1="632" y1="326.0" x2="661" y2="325.5" stroke="#7fa8e8" stroke-width="0.9" opacity="0.6"/><line x1="632" y1="330.5" x2="670" y2="330.0" stroke="#7fa8e8" stroke-width="0.9" opacity="0.6"/><line x1="632" y1="335.0" x2="655" y2="334.5" stroke="#7fa8e8" stroke-width="0.9" opacity="0.6"/><circle cx="588" cy="407" r="2.2" fill="#4050d8"/></svg>
<div class="btn" style="left:651px;top:406px;width:97.0px"></div>
<svg class="a" style="left:672.2px;top:414px" width="14" height="18" viewBox="0 0 14 18"><path d="M0.8 1.6 L13 9 L0.8 16.4 Z" fill="#fff"/></svg>
<div class="t" style="left:691.50px;top:416.21px;font-size:15.4px;color:#eaf5ee;font-weight:400;letter-spacing:0.3px;-webkit-text-stroke:0.08px currentColor;">Start</div>
<div class="t" style="left:411.00px;top:454.22px;font-size:20.8px;color:#111;font-weight:700;letter-spacing:0.445px;">Predicting Education Attainment</div>
<svg class="a" style="left:411.50px;top:490.50px" width="15" height="15" viewBox="0 0 15 15"><g transform="scale(1.0)"><circle cx="7" cy="4.2" r="2.7" fill="none" stroke="#333" stroke-width="1.25"/><path d="M1.3 12.6 c0-3 2.6-4.6 5.7-4.6 s5.7 1.6 5.7 4.6 c0 0.6-0.4 0.9-0.9 0.9 H2.2 c-0.5 0-0.9-0.3-0.9-0.9 Z" fill="none" stroke="#333" stroke-width="1.25"/></g></svg>
<div class="t" style="left:433.00px;top:491.29px;font-size:16.6px;color:#2a2a2a;font-weight:400;letter-spacing:0.55px;">Emily Johnson</div>
<div class="t" style="left:412.00px;top:521.19px;font-size:16.6px;color:#858585;font-weight:400;letter-spacing:0.764px;">#education, #machine-learning</div>
<svg class="a" style="left:412.00px;top:582.80px" width="18" height="15" viewBox="0 0 18 15"><path d="M2.4 9.0 L10.2 8.0 L11.5 1.9 M10.2 8.0 L14.9 12.4" stroke="#111" stroke-width="1.0" fill="none"/><circle cx="2.4" cy="9.0" r="1.7" fill="#111"/><circle cx="10.2" cy="8.0" r="1.7" fill="#111"/><circle cx="11.5" cy="1.9" r="1.8" fill="#111"/><circle cx="14.9" cy="12.4" r="1.9" fill="#111"/></svg>
<div class="t" style="left:436.20px;top:583.89px;font-size:16.6px;color:#2a2a2a;font-weight:400;letter-spacing:0.498px;">Project</div>
<div class="t" style="left:412.00px;top:612.20px;font-size:13.3px;color:#333;font-weight:400;letter-spacing:0.664px;-webkit-text-stroke:0.08px currentColor;">3 components</div>
<div class="t" style="left:412.00px;top:638.20px;font-size:13.3px;color:#333;font-weight:400;letter-spacing:0.616px;-webkit-text-stroke:0.08px currentColor;">Created 5 months ago</div>
<div class="card" style="left:814px;top:215px"></div>
<svg class="a" style="left:900px;top:225px" width="195" height="195" viewBox="900 225 195 195"><defs><clipPath id="avc"><circle cx="997" cy="320" r="88"/></clipPath></defs><circle cx="997" cy="320" r="88.2" fill="#fff" stroke="#2a2a2a" stroke-width="1.3"/><g clip-path="url(#avc)"><path d="M925 420 C928 385 950 366 982 360 L1012 360 C1040 364 1062 382 1066 420 Z" fill="#222"/><path d="M983 348 V366 L997 376 L1008 366 V348 Z" fill="#fff" stroke="#222" stroke-width="1.2"/><path d="M981 359 L974 372 L982 384 L997 372 Z" fill="#fff" stroke="#222" stroke-width="1.1"/><path d="M1009 359 L1017 371 L1011 384 L997 372 Z" fill="#fff" stroke="#222" stroke-width="1.1"/><line x1="997.5" y1="373" x2="997.5" y2="406" stroke="#ddd" stroke-width="1"/><circle cx="991.6" cy="387.8" r="1.6" fill="none" stroke="#ddd" stroke-width="0.9"/><circle cx="991.6" cy="398.4" r="1.6" fill="none" stroke="#ddd" stroke-width="0.9"/></g><path d="M963 338 C958 320 957.5 300 960.5 284 C963.5 272 975 267 990 266.5 L1015 267 C1017 262 1019 258.5 1021 260.5 C1026 264 1028 271 1026.5 276 C1031.5 282 1032 292 1031 303 L1026 304 L972 304 L973 340 C969 340 965 339 963 338 Z" fill="#222"/><path d="M972.5 286.5 C990 285 1012 285 1026.6 287 C1027.2 302 1027.6 322 1026.8 336 C1026 347 1018 352.5 1000 352.5 C984 352.5 975 347 973.5 338 C971.8 322 971.8 302 972.5 286.5 Z" fill="#fff" stroke="#222" stroke-width="1.2"/><path d="M973 313 C962 308 955 318 959 325 C962 331 970 331 974 328" fill="#fff" stroke="#222" stroke-width="1.2"/><path d="M970 317 C965 316 963 322 966 325" fill="none" stroke="#222" stroke-width="1"/><rect x="986" y="306.5" width="14.5" height="3.4" rx="1.5" fill="#222"/><rect x="1008.6" y="306.5" width="14.5" height="3.4" rx="1.5" fill="#222"/><circle cx="993.4" cy="315.6" r="2" fill="#222"/><circle cx="1016.1" cy="315.6" r="2" fill="#222"/><path d="M1005 317 L1007 327 C1007 329 1005 329.5 1003.5 329" fill="none" stroke="#222" stroke-width="1"/><path d="M996 334 C1000 337 1005 337.5 1010 335" fill="none" stroke="#222" stroke-width="1.1"/><path d="M984 323 l2 2 l2 -2 l2 2 M1014 324 l2 -2 l2 2 l2 -2" fill="none" stroke="#555" stroke-width="0.7"/></svg>
<div class="btn" style="left:1084px;top:406px;width:78.4px"></div>
<div class="t" style="left:1106.40px;top:416.21px;font-size:15.4px;color:#eaf5ee;font-weight:400;letter-spacing:-0.235px;-webkit-text-stroke:0.08px currentColor;">View</div>
<div class="t" style="left:828.00px;top:454.22px;font-size:20.8px;color:#111;font-weight:700;letter-spacing:0.235px;">Emily Johnson</div>
<svg class="a" style="left:829.00px;top:487.30px" width="13" height="18" viewBox="0 0 13 18"><rect x="0.8" y="0.8" width="11" height="16.6" rx="0.8" fill="none" stroke="#222" stroke-width="1.3"/><rect x="2.6" y="2.8" width="1.9" height="1.8" fill="#222"/><rect x="2.6" y="5.7" width="1.9" height="1.8" fill="#222"/><rect x="2.6" y="8.6" width="1.9" height="1.8" fill="#222"/><rect x="2.6" y="11.5" width="1.9" height="1.8" fill="#222"/><rect x="5.6" y="2.8" width="1.9" height="1.8" fill="#222"/><rect x="5.6" y="5.7" width="1.9" height="1.8" fill="#222"/><rect x="5.6" y="8.6" width="1.9" height="1.8" fill="#222"/><rect x="5.6" y="11.5" width="1.9" height="1.8" fill="#222"/><rect x="8.6" y="2.8" width="1.9" height="1.8" fill="#222"/><rect x="8.6" y="5.7" width="1.9" height="1.8" fill="#222"/><rect x="8.6" y="8.6" width="1.9" height="1.8" fill="#222"/><rect x="8.6" y="11.5" width="1.9" height="1.8" fill="#222"/><rect x="4.6" y="14.2" width="3.4" height="3" fill="#222"/></svg>
<div class="t" style="left:853.30px;top:491.29px;font-size:16.6px;color:#2a2a2a;font-weight:400;letter-spacing:0.583px;">Alderidge University</div>
<div class="t" style="left:829.00px;top:521.19px;font-size:16.6px;color:#858585;font-weight:400;letter-spacing:0.847px;">#sociology, #education</div>
<svg class="a" style="left:828.50px;top:583.50px" width="15" height="15" viewBox="0 0 15 15"><g transform="scale(1.0)"><circle cx="7" cy="4.2" r="2.7" fill="none" stroke="#333" stroke-width="1.25"/><path d="M1.3 12.6 c0-3 2.6-4.6 5.7-4.6 s5.7 1.6 5.7 4.6 c0 0.6-0.4 0.9-0.9 0.9 H2.2 c-0.5 0-0.9-0.3-0.9-0.9 Z" fill="none" stroke="#333" stroke-width="1.25"/></g></svg>
<div class="t" style="left:850.00px;top:583.89px;font-size:16.6px;color:#2a2a2a;font-weight:400;letter-spacing:0.62px;">Person</div>
<div class="t" style="left:829.00px;top:611.70px;font-size:13.3px;color:#333;font-weight:400;letter-spacing:0.702px;-webkit-text-stroke:0.08px currentColor;">6 projects</div>
<div class="t" style="left:828.00px;top:637.80px;font-size:13.3px;color:#333;font-weight:400;letter-spacing:0.679px;-webkit-text-stroke:0.08px currentColor;">Member for 2 years</div>
<div class="card" style="left:1230px;top:215px"></div>
<svg class="a" style="left:1230px;top:215px;border-radius:4px 4px 0 0" width="367.5" height="208" viewBox="1230 215 367.5 208"><defs><linearGradient id="bnbg" x1="0" y1="0" x2="1" y2="0"><stop offset="0" stop-color="#123466"/><stop offset="0.12" stop-color="#0b2448"/><stop offset="0.25" stop-color="#040e22"/><stop offset="0.40" stop-color="#071c3c"/><stop offset="0.47" stop-color="#1c4c88"/><stop offset="0.62" stop-color="#1b467f"/><stop offset="0.8" stop-color="#12325e"/><stop offset="1" stop-color="#0c2648"/></linearGradient><filter id="bb2" x="-50%" y="-50%" width="200%" height="200%"><feGaussianBlur stdDeviation="2.2"/></filter><filter id="bb1" x="-50%" y="-50%" width="200%" height="200%"><feGaussianBlur stdDeviation="0.6"/></filter><filter id="bb4" x="-50%" y="-50%" width="200%" height="200%"><feGaussianBlur stdDeviation="4"/></filter></defs><rect x="1230" y="215" width="367.5" height="208" fill="url(#bnbg)"/><circle cx="1495.5" cy="332.0" r="10.2" fill="#2f66aa" opacity="0.39" stroke="#5a92d0" stroke-width="0.8" stroke-opacity="0.5"/><circle cx="1522.5" cy="250.3" r="8.5" fill="#2f66aa" opacity="0.45" stroke="#5a92d0" stroke-width="0.8" stroke-opacity="0.5"/><circle cx="1423.8" cy="276.1" r="6.9" fill="#2f66aa" opacity="0.52" stroke="#5a92d0" stroke-width="0.8" stroke-opacity="0.5"/><circle cx="1413.4" cy="424.1" r="10.4" fill="#2f66aa" opacity="0.46" stroke="#5a92d0" stroke-width="0.8" stroke-opacity="0.5"/><circle cx="1436.5" cy="213.3" r="8.6" fill="#4582c8" opacity="0.22" stroke="#5a92d0" stroke-width="0.8" stroke-opacity="0.5"/><circle cx="1453.4" cy="216.6" r="8.4" fill="#2f66aa" opacity="0.38" stroke="#5a92d0" stroke-width="0.8" stroke-opacity="0.5"/><circle cx="1508.8" cy="349.6" r="8.5" fill="#4582c8" opacity="0.46" stroke="#5a92d0" stroke-width="0.8" stroke-opacity="0.5"/><circle cx="1460.6" cy="427.5" r="10.5" fill="#2f66aa" opacity="0.54" stroke="#5a92d0" stroke-width="0.8" stroke-opacity="0.5"/><circle cx="1468.1" cy="260.1" r="7.7" fill="#2f66aa" opacity="0.23" stroke="#5a92d0" stroke-width="0.8" stroke-opacity="0.5"/><circle cx="1485.1" cy="394.6" r="8.0" fill="#2f66aa" opacity="0.58" stroke="#5a92d0" stroke-width="0.8" stroke-opacity="0.5"/><circle cx="1405.1" cy="255.7" r="10.1" fill="#2f66aa" opacity="0.39" stroke="#5a92d0" stroke-width="0.8" stroke-opacity="0.5"/><circle cx="1484.5" cy="225.9" r="9.0" fill="#4582c8" opacity="0.51" stroke="#5a92d0" stroke-width="0.8" stroke-opacity="0.5"/><circle cx="1422.4" cy="282.5" r="10.4" fill="#4582c8" opacity="0.50" stroke="#5a92d0" stroke-width="0.8" stroke-opacity="0.5"/><circle cx="1454.3" cy="232.0" r="6.7" fill="#4582c8" opacity="0.52" stroke="#5a92d0" stroke-width="0.8" stroke-opacity="0.5"/><circle cx="1516.9" cy="307.5" r="7.3" fill="#4582c8" opacity="0.49" stroke="#5a92d0" stroke-width="0.8" stroke-opacity="0.5"/><circle cx="1533.7" cy="235.4" r="8.2" fill="#4582c8" opacity="0.29" stroke="#5a92d0" stroke-width="0.8" stroke-opacity="0.5"/><circle cx="1599.2" cy="385.1" r="7.7" fill="#4582c8" opacity="0.55" stroke="#5a92d0" stroke-width="0.8" stroke-opacity="0.5"/><circle cx="1483.9" cy="396.3" r="9.1" fill="#2f66aa" opacity="0.24" stroke="#5a92d0" stroke-width="0.8" stroke-opacity="0.5"/><circle cx="1447.6" cy="266.3" r="9.6" fill="#4582c8" opacity="0.33" stroke="#5a92d0" stroke-width="0.8" stroke-opacity="0.5"/><circle cx="1419.7" cy="229.6" r="8.8" fill="#2f66aa" opacity="0.30" stroke="#5a92d0" stroke-width="0.8" stroke-opacity="0.5"/><circle cx="1479.3" cy="308.8" r="10.3" fill="#2f66aa" opacity="0.39" stroke="#5a92d0" stroke-width="0.8" stroke-opacity="0.5"/><circle cx="1578.3" cy="249.9" r="7.1" fill="#2f66aa" opacity="0.56" stroke="#5a92d0" stroke-width="0.8" stroke-opacity="0.5"/><circle cx="1454.9" cy="251.4" r="9.5" fill="#4582c8" opacity="0.58" stroke="#5a92d0" stroke-width="0.8" stroke-opacity="0.5"/><circle cx="1595.0" cy="402.3" r="8.9" fill="#4582c8" opacity="0.37" stroke="#5a92d0" stroke-width="0.8" stroke-opacity="0.5"/><circle cx="1412.7" cy="419.9" r="7.5" fill="#4582c8" opacity="0.48" stroke="#5a92d0" stroke-width="0.8" stroke-opacity="0.5"/><circle cx="1569.7" cy="340.0" r="7.7" fill="#2f66aa" opacity="0.27" stroke="#5a92d0" stroke-width="0.8" stroke-opacity="0.5"/><circle cx="1418.8" cy="259.8" r="8.7" fill="#2f66aa" opacity="0.54" stroke="#5a92d0" stroke-width="0.8" stroke-opacity="0.5"/><circle cx="1461.0" cy="410.0" r="7.3" fill="#4582c8" opacity="0.21" stroke="#5a92d0" stroke-width="0.8" stroke-opacity="0.5"/><circle cx="1494.1" cy="223.2" r="7.2" fill="#2f66aa" opacity="0.35" stroke="#5a92d0" stroke-width="0.8" stroke-opacity="0.5"/><circle cx="1431.3" cy="288.9" r="10.1" fill="#2f66aa" opacity="0.59" stroke="#5a92d0" stroke-width="0.8" stroke-opacity="0.5"/><circle cx="1543.2" cy="337.4" r="7.1" fill="#4582c8" opacity="0.21" stroke="#5a92d0" stroke-width="0.8" stroke-opacity="0.5"/><circle cx="1587.0" cy="362.8" r="10.4" fill="#2f66aa" opacity="0.21" stroke="#5a92d0" stroke-width="0.8" stroke-opacity="0.5"/><circle cx="1501.4" cy="369.2" r="7.8" fill="#4582c8" opacity="0.60" stroke="#5a92d0" stroke-width="0.8" stroke-opacity="0.5"/><circle cx="1514.2" cy="370.7" r="10.1" fill="#2f66aa" opacity="0.49" stroke="#5a92d0" stroke-width="0.8" stroke-opacity="0.5"/><circle cx="1563.7" cy="409.5" r="7.9" fill="#2f66aa" opacity="0.47" stroke="#5a92d0" stroke-width="0.8" stroke-opacity="0.5"/><circle cx="1579.2" cy="300.9" r="9.7" fill="#2f66aa" opacity="0.55" stroke="#5a92d0" stroke-width="0.8" stroke-opacity="0.5"/><circle cx="1530.0" cy="293.3" r="8.8" fill="#4582c8" opacity="0.44" stroke="#5a92d0" stroke-width="0.8" stroke-opacity="0.5"/><circle cx="1532.9" cy="426.5" r="10.0" fill="#4582c8" opacity="0.49" stroke="#5a92d0" stroke-width="0.8" stroke-opacity="0.5"/><circle cx="1552.0" cy="336.6" r="8.3" fill="#4582c8" opacity="0.54" stroke="#5a92d0" stroke-width="0.8" stroke-opacity="0.5"/><circle cx="1555.0" cy="216.5" r="8.9" fill="#4582c8" opacity="0.39" stroke="#5a92d0" stroke-width="0.8" stroke-opacity="0.5"/><circle cx="1544.7" cy="318.4" r="9.0" fill="#4582c8" opacity="0.57" stroke="#5a92d0" stroke-width="0.8" stroke-opacity="0.5"/><circle cx="1407.3" cy="275.6" r="9.2" fill="#4582c8" opacity="0.28" stroke="#5a92d0" stroke-width="0.8" stroke-opacity="0.5"/><circle cx="1586.1" cy="353.9" r="8.3" fill="#4582c8" opacity="0.56" stroke="#5a92d0" stroke-width="0.8" stroke-opacity="0.5"/><circle cx="1538.2" cy="253.3" r="8.2" fill="#2f66aa" opacity="0.52" stroke="#5a92d0" stroke-width="0.8" stroke-opacity="0.5"/><circle cx="1581.1" cy="293.8" r="8.8" fill="#4582c8" opacity="0.33" stroke="#5a92d0" stroke-width="0.8" stroke-opacity="0.5"/><circle cx="1504.3" cy="392.5" r="9.9" fill="#2f66aa" opacity="0.48" stroke="#5a92d0" stroke-width="0.8" stroke-opacity="0.5"/><circle cx="1460.4" cy="246.9" r="8.3" fill="#4582c8" opacity="0.31" stroke="#5a92d0" stroke-width="0.8" stroke-opacity="0.5"/><circle cx="1487.8" cy="346.4" r="8.5" fill="#2f66aa" opacity="0.33" stroke="#5a92d0" stroke-width="0.8" stroke-opacity="0.5"/><circle cx="1601.4" cy="308.6" r="6.8" fill="#2f66aa" opacity="0.21" stroke="#5a92d0" stroke-width="0.8" stroke-opacity="0.5"/><circle cx="1413.3" cy="364.5" r="8.8" fill="#2f66aa" opacity="0.32" stroke="#5a92d0" stroke-width="0.8" stroke-opacity="0.5"/><circle cx="1408.8" cy="239.6" r="8.3" fill="#2f66aa" opacity="0.21" stroke="#5a92d0" stroke-width="0.8" stroke-opacity="0.5"/><circle cx="1452.5" cy="240.7" r="6.7" fill="#4582c8" opacity="0.45" stroke="#5a92d0" stroke-width="0.8" stroke-opacity="0.5"/><circle cx="1531.0" cy="352.8" r="9.7" fill="#2f66aa" opacity="0.58" stroke="#5a92d0" stroke-width="0.8" stroke-opacity="0.5"/><circle cx="1444.9" cy="313.6" r="7.2" fill="#4582c8" opacity="0.20" stroke="#5a92d0" stroke-width="0.8" stroke-opacity="0.5"/><circle cx="1547.8" cy="249.0" r="7.6" fill="#2f66aa" opacity="0.34" stroke="#5a92d0" stroke-width="0.8" stroke-opacity="0.5"/><circle cx="1509.1" cy="343.9" r="9.5" fill="#2f66aa" opacity="0.36" stroke="#5a92d0" stroke-width="0.8" stroke-opacity="0.5"/><circle cx="1586.2" cy="229.0" r="10.2" fill="#4582c8" opacity="0.49" stroke="#5a92d0" stroke-width="0.8" stroke-opacity="0.5"/><circle cx="1495.7" cy="346.4" r="10.1" fill="#2f66aa" opacity="0.35" stroke="#5a92d0" stroke-width="0.8" stroke-opacity="0.5"/><circle cx="1580.9" cy="383.7" r="10.3" fill="#2f66aa" opacity="0.39" stroke="#5a92d0" stroke-width="0.8" stroke-opacity="0.5"/><circle cx="1446.0" cy="367.4" r="9.8" fill="#2f66aa" opacity="0.46" stroke="#5a92d0" stroke-width="0.8" stroke-opacity="0.5"/><circle cx="1447.7" cy="406.2" r="10.4" fill="#2f66aa" opacity="0.59" stroke="#5a92d0" stroke-width="0.8" stroke-opacity="0.5"/><circle cx="1563.2" cy="279.8" r="10.1" fill="#4582c8" opacity="0.54" stroke="#5a92d0" stroke-width="0.8" stroke-opacity="0.5"/><circle cx="1421.6" cy="306.1" r="8.7" fill="#4582c8" opacity="0.51" stroke="#5a92d0" stroke-width="0.8" stroke-opacity="0.5"/><circle cx="1410.7" cy="386.4" r="6.8" fill="#4582c8" opacity="0.52" stroke="#5a92d0" stroke-width="0.8" stroke-opacity="0.5"/><circle cx="1472.0" cy="381.8" r="7.1" fill="#2f66aa" opacity="0.26" stroke="#5a92d0" stroke-width="0.8" stroke-opacity="0.5"/><circle cx="1549.7" cy="393.1" r="9.3" fill="#4582c8" opacity="0.58" stroke="#5a92d0" stroke-width="0.8" stroke-opacity="0.5"/><circle cx="1594.8" cy="228.8" r="7.4" fill="#4582c8" opacity="0.41" stroke="#5a92d0" stroke-width="0.8" stroke-opacity="0.5"/><circle cx="1550.8" cy="349.3" r="8.6" fill="#2f66aa" opacity="0.54" stroke="#5a92d0" stroke-width="0.8" stroke-opacity="0.5"/><circle cx="1467.3" cy="293.1" r="9.9" fill="#4582c8" opacity="0.56" stroke="#5a92d0" stroke-width="0.8" stroke-opacity="0.5"/><circle cx="1575.2" cy="421.1" r="8.6" fill="#4582c8" opacity="0.43" stroke="#5a92d0" stroke-width="0.8" stroke-opacity="0.5"/><circle cx="1512.2" cy="319.7" r="8.9" fill="#2f66aa" opacity="0.21" stroke="#5a92d0" stroke-width="0.8" stroke-opacity="0.5"/><circle cx="1508.2" cy="297.3" r="9.7" fill="#4582c8" opacity="0.43" stroke="#5a92d0" stroke-width="0.8" stroke-opacity="0.5"/><circle cx="1543.2" cy="224.4" r="8.7" fill="#2f66aa" opacity="0.37" stroke="#5a92d0" stroke-width="0.8" stroke-opacity="0.5"/><circle cx="1589.7" cy="268.7" r="8.4" fill="#4582c8" opacity="0.25" stroke="#5a92d0" stroke-width="0.8" stroke-opacity="0.5"/><circle cx="1568.1" cy="406.3" r="8.4" fill="#4582c8" opacity="0.33" stroke="#5a92d0" stroke-width="0.8" stroke-opacity="0.5"/><circle cx="1528.6" cy="411.7" r="7.0" fill="#4582c8" opacity="0.51" stroke="#5a92d0" stroke-width="0.8" stroke-opacity="0.5"/><circle cx="1443.8" cy="259.5" r="9.2" fill="#4582c8" opacity="0.33" stroke="#5a92d0" stroke-width="0.8" stroke-opacity="0.5"/><circle cx="1529.0" cy="232.9" r="9.4" fill="#2f66aa" opacity="0.25" stroke="#5a92d0" stroke-width="0.8" stroke-opacity="0.5"/><circle cx="1455.1" cy="253.1" r="8.6" fill="#4582c8" opacity="0.37" stroke="#5a92d0" stroke-width="0.8" stroke-opacity="0.5"/><circle cx="1487.7" cy="325.4" r="7.1" fill="#2f66aa" opacity="0.28" stroke="#5a92d0" stroke-width="0.8" stroke-opacity="0.5"/><circle cx="1532.7" cy="325.5" r="9.9" fill="#2f66aa" opacity="0.44" stroke="#5a92d0" stroke-width="0.8" stroke-opacity="0.5"/><circle cx="1451.5" cy="371.5" r="9.7" fill="#4582c8" opacity="0.56" stroke="#5a92d0" stroke-width="0.8" stroke-opacity="0.5"/><circle cx="1468.0" cy="411.2" r="7.4" fill="#2f66aa" opacity="0.60" stroke="#5a92d0" stroke-width="0.8" stroke-opacity="0.5"/><circle cx="1431.8" cy="262.2" r="9.4" fill="#4582c8" opacity="0.30" stroke="#5a92d0" stroke-width="0.8" stroke-opacity="0.5"/><circle cx="1571.4" cy="301.9" r="9.7" fill="#4582c8" opacity="0.25" stroke="#5a92d0" stroke-width="0.8" stroke-opacity="0.5"/><circle cx="1542.0" cy="213.9" r="7.3" fill="#2f66aa" opacity="0.47" stroke="#5a92d0" stroke-width="0.8" stroke-opacity="0.5"/><circle cx="1598.7" cy="235.2" r="8.5" fill="#2f66aa" opacity="0.50" stroke="#5a92d0" stroke-width="0.8" stroke-opacity="0.5"/><circle cx="1542.1" cy="251.2" r="6.8" fill="#4582c8" opacity="0.24" stroke="#5a92d0" stroke-width="0.8" stroke-opacity="0.5"/><circle cx="1515.3" cy="322.2" r="8.8" fill="#4582c8" opacity="0.26" stroke="#5a92d0" stroke-width="0.8" stroke-opacity="0.5"/><circle cx="1445.8" cy="393.2" r="10.5" fill="#4582c8" opacity="0.57" stroke="#5a92d0" stroke-width="0.8" stroke-opacity="0.5"/><circle cx="1417.4" cy="417.4" r="8.3" fill="#4582c8" opacity="0.51" stroke="#5a92d0" stroke-width="0.8" stroke-opacity="0.5"/><circle cx="1498.4" cy="322.3" r="8.2" fill="#4582c8" opacity="0.44" stroke="#5a92d0" stroke-width="0.8" stroke-opacity="0.5"/><circle cx="1545.2" cy="394.0" r="7.2" fill="#2f66aa" opacity="0.38" stroke="#5a92d0" stroke-width="0.8" stroke-opacity="0.5"/><circle cx="1486.1" cy="252.5" r="7.2" fill="#4582c8" opacity="0.41" stroke="#5a92d0" stroke-width="0.8" stroke-opacity="0.5"/><circle cx="1583.6" cy="384.8" r="9.3" fill="#2f66aa" opacity="0.54" stroke="#5a92d0" stroke-width="0.8" stroke-opacity="0.5"/><circle cx="1485.9" cy="340.7" r="8.5" fill="#2f66aa" opacity="0.59" stroke="#5a92d0" stroke-width="0.8" stroke-opacity="0.5"/><circle cx="1456.7" cy="408.7" r="9.5" fill="#2f66aa" opacity="0.51" stroke="#5a92d0" stroke-width="0.8" stroke-opacity="0.5"/><circle cx="1486.1" cy="405.4" r="10.0" fill="#2f66aa" opacity="0.48" stroke="#5a92d0" stroke-width="0.8" stroke-opacity="0.5"/><circle cx="1558.0" cy="298.5" r="9.4" fill="#4582c8" opacity="0.23" stroke="#5a92d0" stroke-width="0.8" stroke-opacity="0.5"/><circle cx="1498.8" cy="212.3" r="7.9" fill="#2f66aa" opacity="0.46" stroke="#5a92d0" stroke-width="0.8" stroke-opacity="0.5"/><circle cx="1451.4" cy="415.9" r="9.2" fill="#2f66aa" opacity="0.34" stroke="#5a92d0" stroke-width="0.8" stroke-opacity="0.5"/><circle cx="1518.9" cy="326.2" r="8.1" fill="#2f66aa" opacity="0.60" stroke="#5a92d0" stroke-width="0.8" stroke-opacity="0.5"/><circle cx="1545.3" cy="376.1" r="10.4" fill="#2f66aa" opacity="0.21" stroke="#5a92d0" stroke-width="0.8" stroke-opacity="0.5"/><circle cx="1552.8" cy="265.9" r="8.1" fill="#4582c8" opacity="0.22" stroke="#5a92d0" stroke-width="0.8" stroke-opacity="0.5"/><circle cx="1480.1" cy="231.5" r="7.5" fill="#2f66aa" opacity="0.56" stroke="#5a92d0" stroke-width="0.8" stroke-opacity="0.5"/><circle cx="1506.6" cy="420.8" r="8.8" fill="#2f66aa" opacity="0.60" stroke="#5a92d0" stroke-width="0.8" stroke-opacity="0.5"/><circle cx="1566.9" cy="226.6" r="8.9" fill="#4582c8" opacity="0.50" stroke="#5a92d0" stroke-width="0.8" stroke-opacity="0.5"/><circle cx="1591.0" cy="244.9" r="8.4" fill="#4582c8" opacity="0.27" stroke="#5a92d0" stroke-width="0.8" stroke-opacity="0.5"/><circle cx="1527.2" cy="222.8" r="10.3" fill="#2f66aa" opacity="0.37" stroke="#5a92d0" stroke-width="0.8" stroke-opacity="0.5"/><circle cx="1524.6" cy="289.7" r="7.6" fill="#2f66aa" opacity="0.46" stroke="#5a92d0" stroke-width="0.8" stroke-opacity="0.5"/><circle cx="1461.7" cy="366.2" r="7.7" fill="#4582c8" opacity="0.21" stroke="#5a92d0" stroke-width="0.8" stroke-opacity="0.5"/><circle cx="1413.6" cy="244.1" r="9.5" fill="#2f66aa" opacity="0.36" stroke="#5a92d0" stroke-width="0.8" stroke-opacity="0.5"/><circle cx="1554.7" cy="220.9" r="10.5" fill="#4582c8" opacity="0.58" stroke="#5a92d0" stroke-width="0.8" stroke-opacity="0.5"/><circle cx="1586.1" cy="303.6" r="8.4" fill="#4582c8" opacity="0.59" stroke="#5a92d0" stroke-width="0.8" stroke-opacity="0.5"/><circle cx="1509.7" cy="414.3" r="9.4" fill="#2f66aa" opacity="0.39" stroke="#5a92d0" stroke-width="0.8" stroke-opacity="0.5"/><circle cx="1568.3" cy="341.6" r="7.0" fill="#4582c8" opacity="0.45" stroke="#5a92d0" stroke-width="0.8" stroke-opacity="0.5"/><circle cx="1445.7" cy="221.3" r="8.6" fill="#4582c8" opacity="0.25" stroke="#5a92d0" stroke-width="0.8" stroke-opacity="0.5"/><circle cx="1538.6" cy="309.3" r="7.5" fill="#4582c8" opacity="0.43" stroke="#5a92d0" stroke-width="0.8" stroke-opacity="0.5"/><circle cx="1560.6" cy="325.7" r="10.5" fill="#2f66aa" opacity="0.58" stroke="#5a92d0" stroke-width="0.8" stroke-opacity="0.5"/><circle cx="1452.7" cy="234.8" r="10.1" fill="#2f66aa" opacity="0.51" stroke="#5a92d0" stroke-width="0.8" stroke-opacity="0.5"/><circle cx="1476.8" cy="269.2" r="9.2" fill="#2f66aa" opacity="0.43" stroke="#5a92d0" stroke-width="0.8" stroke-opacity="0.5"/><circle cx="1531.6" cy="374.2" r="7.3" fill="#2f66aa" opacity="0.30" stroke="#5a92d0" stroke-width="0.8" stroke-opacity="0.5"/><circle cx="1588.1" cy="401.6" r="6.7" fill="#4582c8" opacity="0.22" stroke="#5a92d0" stroke-width="0.8" stroke-opacity="0.5"/><circle cx="1490.0" cy="345.9" r="6.9" fill="#4582c8" opacity="0.42" stroke="#5a92d0" stroke-width="0.8" stroke-opacity="0.5"/><circle cx="1422.3" cy="357.4" r="8.7" fill="#4582c8" opacity="0.45" stroke="#5a92d0" stroke-width="0.8" stroke-opacity="0.5"/><circle cx="1500.7" cy="255.9" r="7.9" fill="#2f66aa" opacity="0.50" stroke="#5a92d0" stroke-width="0.8" stroke-opacity="0.5"/><circle cx="1419.9" cy="236.1" r="9.7" fill="#2f66aa" opacity="0.45" stroke="#5a92d0" stroke-width="0.8" stroke-opacity="0.5"/><circle cx="1447.6" cy="302.5" r="7.5" fill="#4582c8" opacity="0.52" stroke="#5a92d0" stroke-width="0.8" stroke-opacity="0.5"/><circle cx="1535.7" cy="425.6" r="7.8" fill="#2f66aa" opacity="0.42" stroke="#5a92d0" stroke-width="0.8" stroke-opacity="0.5"/><circle cx="1589.2" cy="303.2" r="8.0" fill="#2f66aa" opacity="0.24" stroke="#5a92d0" stroke-width="0.8" stroke-opacity="0.5"/><circle cx="1260" cy="292" r="8" fill="#3b78c0" opacity="0.6" filter="url(#bb2)"/><circle cx="1260" cy="335" r="9" fill="#3b78c0" opacity="0.6" filter="url(#bb2)"/><circle cx="1244" cy="363" r="8" fill="#3b78c0" opacity="0.6" filter="url(#bb2)"/><circle cx="1232" cy="313" r="8" fill="#3b78c0" opacity="0.6" filter="url(#bb2)"/><circle cx="1250" cy="250" r="7" fill="#3b78c0" opacity="0.6" filter="url(#bb2)"/><circle cx="1238" cy="400" r="8" fill="#3b78c0" opacity="0.6" filter="url(#bb2)"/><text x="0" y="0" transform="translate(1234 235.0) scale(0.85 1)" font-family="Liberation Serif" font-weight="700" font-size="26" fill="#3f80c8" opacity="0.69" text-anchor="middle" filter="url(#bb2)">0</text><text x="0" y="0" transform="translate(1234 256.2) scale(0.85 1)" font-family="Liberation Serif" font-weight="700" font-size="26" fill="#3f80c8" opacity="0.73" text-anchor="middle" filter="url(#bb2)">0</text><text x="0" y="0" transform="translate(1234 298.6) scale(0.85 1)" font-family="Liberation Serif" font-weight="700" font-size="26" fill="#3f80c8" opacity="0.64" text-anchor="middle" filter="url(#bb2)">0</text><text x="0" y="0" transform="translate(1234 319.8) scale(0.85 1)" font-family="Liberation Serif" font-weight="700" font-size="26" fill="#3f80c8" opacity="0.59" text-anchor="middle" filter="url(#bb2)">1</text><text x="0" y="0" transform="translate(1234 341.0) scale(0.85 1)" font-family="Liberation Serif" font-weight="700" font-size="26" fill="#3f80c8" opacity="0.62" text-anchor="middle" filter="url(#bb2)">0</text><text x="0" y="0" transform="translate(1234 383.4) scale(0.85 1)" font-family="Liberation Serif" font-weight="700" font-size="26" fill="#3f80c8" opacity="0.72" text-anchor="middle" filter="url(#bb2)">1</text><text x="0" y="0" transform="translate(1234 404.6) scale(0.85 1)" font-family="Liberation Serif" font-weight="700" font-size="26" fill="#3f80c8" opacity="0.69" text-anchor="middle" filter="url(#bb2)">1</text><text x="0" y="0" transform="translate(1247 235.0) scale(0.85 1)" font-family="Liberation Serif" font-weight="700" font-size="26" fill="#3a78c0" opacity="0.42" text-anchor="middle" filter="url(#bb2)">1</text><text x="0" y="0" transform="translate(1247 256.2) scale(0.85 1)" font-family="Liberation Serif" font-weight="700" font-size="26" fill="#3a78c0" opacity="0.48" text-anchor="middle" filter="url(#bb2)">1</text><text x="0" y="0" transform="translate(1247 277.4) scale(0.85 1)" font-family="Liberation Serif" font-weight="700" font-size="26" fill="#3a78c0" opacity="0.50" text-anchor="middle" filter="url(#bb2)">0</text><text x="0" y="0" transform="translate(1247 298.6) scale(0.85 1)" font-family="Liberation Serif" font-weight="700" font-size="26" fill="#3a78c0" opacity="0.61" text-anchor="middle" filter="url(#bb2)">0</text><text x="0" y="0" transform="translate(1247 319.8) scale(0.85 1)" font-family="Liberation Serif" font-weight="700" font-size="26" fill="#3a78c0" opacity="0.61" text-anchor="middle" filter="url(#bb2)">0</text><text x="0" y="0" transform="translate(1247 341.0) scale(0.85 1)" font-family="Liberation Serif" font-weight="700" font-size="26" fill="#3a78c0" opacity="0.50" text-anchor="middle" filter="url(#bb2)">0</text><text x="0" y="0" transform="translate(1247 362.2) scale(0.85 1)" font-family="Liberation Serif" font-weight="700" font-size="26" fill="#3a78c0" opacity="0.46" text-anchor="middle" filter="url(#bb2)">1</text><text x="0" y="0" transform="translate(1247 404.6) scale(0.85 1)" font-family="Liberation Serif" font-weight="700" font-size="26" fill="#3a78c0" opacity="0.42" text-anchor="middle" filter="url(#bb2)">0</text><text x="0" y="0" transform="translate(1247 425.8) scale(0.85 1)" font-family="Liberation Serif" font-weight="700" font-size="26" fill="#3a78c0" opacity="0.51" text-anchor="middle" filter="url(#bb2)">1</text><text x="0" y="0" transform="translate(1262 235.0) scale(0.85 1)" font-family="Liberation Serif" font-weight="700" font-size="26" fill="#4a8ad0" opacity="0.58" text-anchor="middle" filter="url(#bb2)">1</text><text x="0" y="0" transform="translate(1262 256.2) scale(0.85 1)" font-family="Liberation Serif" font-weight="700" font-size="26" fill="#4a8ad0" opacity="0.50" text-anchor="middle" filter="url(#bb2)">0</text><text x="0" y="0" transform="translate(1262 277.4) scale(0.85 1)" font-family="Liberation Serif" font-weight="700" font-size="26" fill="#4a8ad0" opacity="0.72" text-anchor="middle" filter="url(#bb2)">1</text><text x="0" y="0" transform="translate(1262 298.6) scale(0.85 1)" font-family="Liberation Serif" font-weight="700" font-size="26" fill="#4a8ad0" opacity="0.73" text-anchor="middle" filter="url(#bb2)">1</text><text x="0" y="0" transform="translate(1262 319.8) scale(0.85 1)" font-family="Liberation Serif" font-weight="700" font-size="26" fill="#4a8ad0" opacity="0.48" text-anchor="middle" filter="url(#bb2)">0</text><text x="0" y="0" transform="translate(1262 362.2) scale(0.85 1)" font-family="Liberation Serif" font-weight="700" font-size="26" fill="#4a8ad0" opacity="0.54" text-anchor="middle" filter="url(#bb2)">0</text><text x="0" y="0" transform="translate(1262 383.4) scale(0.85 1)" font-family="Liberation Serif" font-weight="700" font-size="26" fill="#4a8ad0" opacity="0.78" text-anchor="middle" filter="url(#bb2)">0</text><text x="0" y="0" transform="translate(1262 404.6) scale(0.85 1)" font-family="Liberation Serif" font-weight="700" font-size="26" fill="#4a8ad0" opacity="0.65" text-anchor="middle" filter="url(#bb2)">1</text><text x="0" y="0" transform="translate(1262 425.8) scale(0.85 1)" font-family="Liberation Serif" font-weight="700" font-size="26" fill="#4a8ad0" opacity="0.72" text-anchor="middle" filter="url(#bb2)">1</text><text x="0" y="0" transform="translate(1279 235.0) scale(0.85 1)" font-family="Liberation Serif" font-weight="700" font-size="26" fill="#3f80c8" opacity="0.37" text-anchor="middle" filter="url(#bb2)">0</text><text x="0" y="0" transform="translate(1279 256.2) scale(0.85 1)" font-family="Liberation Serif" font-weight="700" font-size="26" fill="#3f80c8" opacity="0.44" text-anchor="middle" filter="url(#bb2)">1</text><text x="0" y="0" transform="translate(1279 277.4) scale(0.85 1)" font-family="Liberation Serif" font-weight="700" font-size="26" fill="#3f80c8" opacity="0.44" text-anchor="middle" filter="url(#bb2)">0</text><text x="0" y="0" transform="translate(1279 298.6) scale(0.85 1)" font-family="Liberation Serif" font-weight="700" font-size="26" fill="#3f80c8" opacity="0.43" text-anchor="middle" filter="url(#bb2)">0</text><text x="0" y="0" transform="translate(1279 319.8) scale(0.85 1)" font-family="Liberation Serif" font-weight="700" font-size="26" fill="#3f80c8" opacity="0.38" text-anchor="middle" filter="url(#bb2)">1</text><text x="0" y="0" transform="translate(1279 362.2) scale(0.85 1)" font-family="Liberation Serif" font-weight="700" font-size="26" fill="#3f80c8" opacity="0.40" text-anchor="middle" filter="url(#bb2)">0</text><text x="0" y="0" transform="translate(1279 404.6) scale(0.85 1)" font-family="Liberation Serif" font-weight="700" font-size="26" fill="#3f80c8" opacity="0.46" text-anchor="middle" filter="url(#bb2)">0</text><text x="0" y="0" transform="translate(1279 425.8) scale(0.85 1)" font-family="Liberation Serif" font-weight="700" font-size="26" fill="#3f80c8" opacity="0.56" text-anchor="middle" filter="url(#bb2)">0</text><text x="0" y="0" transform="translate(1389 235.0) scale(0.85 1)" font-family="Liberation Serif" font-weight="700" font-size="26" fill="#62a2da" opacity="0.56" text-anchor="middle" filter="url(#bb2)">1</text><text x="0" y="0" transform="translate(1389 256.2) scale(0.85 1)" font-family="Liberation Serif" font-weight="700" font-size="26" fill="#62a2da" opacity="0.72" text-anchor="middle" filter="url(#bb2)">1</text><text x="0" y="0" transform="translate(1389 277.4) scale(0.85 1)" font-family="Liberation Serif" font-weight="700" font-size="26" fill="#62a2da" opacity="0.80" text-anchor="middle" filter="url(#bb2)">1</text><text x="0" y="0" transform="translate(1389 298.6) scale(0.85 1)" font-family="Liberation Serif" font-weight="700" font-size="26" fill="#62a2da" opacity="0.82" text-anchor="middle" filter="url(#bb2)">0</text><text x="0" y="0" transform="translate(1389 341.0) scale(0.85 1)" font-family="Liberation Serif" font-weight="700" font-size="26" fill="#62a2da" opacity="0.84" text-anchor="middle" filter="url(#bb2)">1</text><text x="0" y="0" transform="translate(1389 362.2) scale(0.85 1)" font-family="Liberation Serif" font-weight="700" font-size="26" fill="#62a2da" opacity="0.90" text-anchor="middle" filter="url(#bb2)">1</text><text x="0" y="0" transform="translate(1389 383.4) scale(0.85 1)" font-family="Liberation Serif" font-weight="700" font-size="26" fill="#62a2da" opacity="0.70" text-anchor="middle" filter="url(#bb2)">0</text><text x="0" y="0" transform="translate(1389 404.6) scale(0.85 1)" font-family="Liberation Serif" font-weight="700" font-size="26" fill="#62a2da" opacity="0.71" text-anchor="middle" filter="url(#bb2)">0</text><text x="0" y="0" transform="translate(1389 425.8) scale(0.85 1)" font-family="Liberation Serif" font-weight="700" font-size="26" fill="#62a2da" opacity="0.59" text-anchor="middle" filter="url(#bb2)">1</text><text x="0" y="0" transform="translate(1403 235.0) scale(0.85 1)" font-family="Liberation Serif" font-weight="700" font-size="26" fill="#6aa8de" opacity="0.84" text-anchor="middle" filter="url(#bb2)">0</text><text x="0" y="0" transform="translate(1403 256.2) scale(0.85 1)" font-family="Liberation Serif" font-weight="700" font-size="26" fill="#6aa8de" opacity="0.63" text-anchor="middle" filter="url(#bb2)">1</text><text x="0" y="0" transform="translate(1403 298.6) scale(0.85 1)" font-family="Liberation Serif" font-weight="700" font-size="26" fill="#6aa8de" opacity="0.80" text-anchor="middle" filter="url(#bb2)">0</text><text x="0" y="0" transform="translate(1403 319.8) scale(0.85 1)" font-family="Liberation Serif" font-weight="700" font-size="26" fill="#6aa8de" opacity="0.77" text-anchor="middle" filter="url(#bb2)">0</text><text x="0" y="0" transform="translate(1403 341.0) scale(0.85 1)" font-family="Liberation Serif" font-weight="700" font-size="26" fill="#6aa8de" opacity="0.77" text-anchor="middle" filter="url(#bb2)">0</text><text x="0" y="0" transform="translate(1403 362.2) scale(0.85 1)" font-family="Liberation Serif" font-weight="700" font-size="26" fill="#6aa8de" opacity="0.61" text-anchor="middle" filter="url(#bb2)">0</text><text x="0" y="0" transform="translate(1403 383.4) scale(0.85 1)" font-family="Liberation Serif" font-weight="700" font-size="26" fill="#6aa8de" opacity="0.74" text-anchor="middle" filter="url(#bb2)">0</text><text x="0" y="0" transform="translate(1403 404.6) scale(0.85 1)" font-family="Liberation Serif" font-weight="700" font-size="26" fill="#6aa8de" opacity="0.73" text-anchor="middle" filter="url(#bb2)">0</text><text x="0" y="0" transform="translate(1403 425.8) scale(0.85 1)" font-family="Liberation Serif" font-weight="700" font-size="26" fill="#6aa8de" opacity="0.70" text-anchor="middle" filter="url(#bb2)">1</text><text x="0" y="0" transform="translate(1376 235.0) scale(0.85 1)" font-family="Liberation Serif" font-weight="700" font-size="26" fill="#4585cc" opacity="0.39" text-anchor="middle" filter="url(#bb2)">0</text><text x="0" y="0" transform="translate(1376 256.2) scale(0.85 1)" font-family="Liberation Serif" font-weight="700" font-size="26" fill="#4585cc" opacity="0.46" text-anchor="middle" filter="url(#bb2)">0</text><text x="0" y="0" transform="translate(1376 277.4) scale(0.85 1)" font-family="Liberation Serif" font-weight="700" font-size="26" fill="#4585cc" opacity="0.45" text-anchor="middle" filter="url(#bb2)">0</text><text x="0" y="0" transform="translate(1376 298.6) scale(0.85 1)" font-family="Liberation Serif" font-weight="700" font-size="26" fill="#4585cc" opacity="0.47" text-anchor="middle" filter="url(#bb2)">1</text><text x="0" y="0" transform="translate(1376 319.8) scale(0.85 1)" font-family="Liberation Serif" font-weight="700" font-size="26" fill="#4585cc" opacity="0.50" text-anchor="middle" filter="url(#bb2)">0</text><text x="0" y="0" transform="translate(1376 341.0) scale(0.85 1)" font-family="Liberation Serif" font-weight="700" font-size="26" fill="#4585cc" opacity="0.41" text-anchor="middle" filter="url(#bb2)">0</text><text x="0" y="0" transform="translate(1376 362.2) scale(0.85 1)" font-family="Liberation Serif" font-weight="700" font-size="26" fill="#4585cc" opacity="0.49" text-anchor="middle" filter="url(#bb2)">0</text><text x="0" y="0" transform="translate(1376 383.4) scale(0.85 1)" font-family="Liberation Serif" font-weight="700" font-size="26" fill="#4585cc" opacity="0.44" text-anchor="middle" filter="url(#bb2)">0</text><text x="0" y="0" transform="translate(1376 404.6) scale(0.85 1)" font-family="Liberation Serif" font-weight="700" font-size="26" fill="#4585cc" opacity="0.46" text-anchor="middle" filter="url(#bb2)">1</text><text x="0" y="0" transform="translate(1376 425.8) scale(0.85 1)" font-family="Liberation Serif" font-weight="700" font-size="26" fill="#4585cc" opacity="0.38" text-anchor="middle" filter="url(#bb2)">0</text><text x="0" y="0" transform="translate(1416 235.0) scale(0.85 1)" font-family="Liberation Serif" font-weight="700" font-size="26" fill="#4a86c8" opacity="0.51" text-anchor="middle" filter="url(#bb2)">0</text><text x="0" y="0" transform="translate(1416 256.2) scale(0.85 1)" font-family="Liberation Serif" font-weight="700" font-size="26" fill="#4a86c8" opacity="0.40" text-anchor="middle" filter="url(#bb2)">1</text><text x="0" y="0" transform="translate(1416 277.4) scale(0.85 1)" font-family="Liberation Serif" font-weight="700" font-size="26" fill="#4a86c8" opacity="0.41" text-anchor="middle" filter="url(#bb2)">0</text><text x="0" y="0" transform="translate(1416 298.6) scale(0.85 1)" font-family="Liberation Serif" font-weight="700" font-size="26" fill="#4a86c8" opacity="0.37" text-anchor="middle" filter="url(#bb2)">0</text><text x="0" y="0" transform="translate(1416 319.8) scale(0.85 1)" font-family="Liberation Serif" font-weight="700" font-size="26" fill="#4a86c8" opacity="0.37" text-anchor="middle" filter="url(#bb2)">1</text><text x="0" y="0" transform="translate(1416 362.2) scale(0.85 1)" font-family="Liberation Serif" font-weight="700" font-size="26" fill="#4a86c8" opacity="0.41" text-anchor="middle" filter="url(#bb2)">1</text><text x="0" y="0" transform="translate(1416 404.6) scale(0.85 1)" font-family="Liberation Serif" font-weight="700" font-size="26" fill="#4a86c8" opacity="0.51" text-anchor="middle" filter="url(#bb2)">1</text><text x="0" y="0" transform="translate(1416 425.8) scale(0.85 1)" font-family="Liberation Serif" font-weight="700" font-size="26" fill="#4a86c8" opacity="0.58" text-anchor="middle" filter="url(#bb2)">1</text><text x="0" y="0" transform="translate(1260.5 234.6) scale(0.85 1)" font-family="Liberation Serif" font-weight="400" font-size="26" fill="#3a78be" opacity="0.7" text-anchor="middle" filter="url(#bb2)">1</text><text x="0" y="0" transform="translate(1278.8 234.6) scale(0.85 1)" font-family="Liberation Serif" font-weight="400" font-size="26" fill="#3a78be" opacity="0.7" text-anchor="middle" filter="url(#bb2)">1</text><text x="0" y="0" transform="translate(1297.0 234.6) scale(0.85 1)" font-family="Liberation Serif" font-weight="400" font-size="26" fill="#4f8fce" opacity="0.9" text-anchor="middle">1</text><text x="0" y="0" transform="translate(1313.6 234.6) scale(0.85 1)" font-family="Liberation Serif" font-weight="700" font-size="26" fill="#f2fbff" opacity="1.0" text-anchor="middle">0</text><text x="0" y="0" transform="translate(1330.2 234.6) scale(0.85 1)" font-family="Liberation Serif" font-weight="700" font-size="26" fill="#9fd2f2" opacity="0.95" text-anchor="middle">1</text><text x="0" y="0" transform="translate(1345.7 234.6) scale(0.85 1)" font-family="Liberation Serif" font-weight="700" font-size="26" fill="#9fd2f2" opacity="0.95" text-anchor="middle">1</text><text x="0" y="0" transform="translate(1360.5 234.6) scale(0.85 1)" font-family="Liberation Serif" font-weight="700" font-size="26" fill="#9fd2f2" opacity="0.95" text-anchor="middle">1</text><text x="0" y="0" transform="translate(1278.8 256.2) scale(0.85 1)" font-family="Liberation Serif" font-weight="400" font-size="26" fill="#3a78be" opacity="0.7" text-anchor="middle" filter="url(#bb2)">0</text><text x="0" y="0" transform="translate(1297.0 256.2) scale(0.85 1)" font-family="Liberation Serif" font-weight="400" font-size="26" fill="#4f8fce" opacity="0.9" text-anchor="middle">1</text><text x="0" y="0" transform="translate(1313.6 256.2) scale(0.85 1)" font-family="Liberation Serif" font-weight="400" font-size="26" fill="#4f8fce" opacity="0.9" text-anchor="middle">1</text><text x="0" y="0" transform="translate(1330.2 256.2) scale(0.85 1)" font-family="Liberation Serif" font-weight="400" font-size="26" fill="#4f8fce" opacity="0.9" text-anchor="middle">0</text><text x="0" y="0" transform="translate(1345.7 256.2) scale(0.85 1)" font-family="Liberation Serif" font-weight="700" font-size="26" fill="#f2fbff" opacity="1.0" text-anchor="middle">0</text><text x="0" y="0" transform="translate(1360.5 256.2) scale(0.85 1)" font-family="Liberation Serif" font-weight="700" font-size="26" fill="#9fd2f2" opacity="0.95" text-anchor="middle">1</text><text x="0" y="0" transform="translate(1375.0 256.2) scale(0.85 1)" font-family="Liberation Serif" font-weight="400" font-size="26" fill="#3a78be" opacity="0.7" text-anchor="middle" filter="url(#bb2)">1</text><text x="0" y="0" transform="translate(1313.6 279.4) scale(0.85 1)" font-family="Liberation Serif" font-weight="700" font-size="26" fill="#f2fbff" opacity="1.0" text-anchor="middle">0</text><text x="0" y="0" transform="translate(1330.2 279.4) scale(0.85 1)" font-family="Liberation Serif" font-weight="700" font-size="26" fill="#9fd2f2" opacity="0.95" text-anchor="middle">0</text><text x="0" y="0" transform="translate(1345.7 279.4) scale(0.85 1)" font-family="Liberation Serif" font-weight="700" font-size="26" fill="#9fd2f2" opacity="0.95" text-anchor="middle">0</text><text x="0" y="0" transform="translate(1360.5 279.4) scale(0.85 1)" font-family="Liberation Serif" font-weight="700" font-size="26" fill="#f2fbff" opacity="1.0" text-anchor="middle">0</text><text x="0" y="0" transform="translate(1375.0 279.4) scale(0.85 1)" font-family="Liberation Serif" font-weight="700" font-size="26" fill="#f2fbff" opacity="1.0" text-anchor="middle">1</text><text x="0" y="0" transform="translate(1388.2 279.4) scale(0.85 1)" font-family="Liberation Serif" font-weight="400" font-size="26" fill="#3a78be" opacity="0.7" text-anchor="middle" filter="url(#bb2)">1</text><text x="0" y="0" transform="translate(1297.0 300.1) scale(0.85 1)" font-family="Liberation Serif" font-weight="400" font-size="26" fill="#4f8fce" opacity="0.9" text-anchor="middle">0</text><text x="0" y="0" transform="translate(1313.6 300.1) scale(0.85 1)" font-family="Liberation Serif" font-weight="400" font-size="26" fill="#4f8fce" opacity="0.9" text-anchor="middle">1</text><text x="0" y="0" transform="translate(1330.2 300.1) scale(0.85 1)" font-family="Liberation Serif" font-weight="700" font-size="26" fill="#f2fbff" opacity="1.0" text-anchor="middle">1</text><text x="0" y="0" transform="translate(1345.7 300.1) scale(0.85 1)" font-family="Liberation Serif" font-weight="700" font-size="26" fill="#f2fbff" opacity="1.0" text-anchor="middle">0</text><text x="0" y="0" transform="translate(1360.5 300.1) scale(0.85 1)" font-family="Liberation Serif" font-weight="400" font-size="26" fill="#4f8fce" opacity="0.9" text-anchor="middle">0</text><text x="0" y="0" transform="translate(1375.0 300.1) scale(0.85 1)" font-family="Liberation Serif" font-weight="700" font-size="26" fill="#9fd2f2" opacity="0.95" text-anchor="middle">1</text><text x="0" y="0" transform="translate(1278.8 320.8) scale(0.85 1)" font-family="Liberation Serif" font-weight="700" font-size="26" fill="#9fd2f2" opacity="0.95" text-anchor="middle">1</text><text x="0" y="0" transform="translate(1297.0 320.8) scale(0.85 1)" font-family="Liberation Serif" font-weight="400" font-size="26" fill="#4f8fce" opacity="0.9" text-anchor="middle">0</text><text x="0" y="0" transform="translate(1313.6 320.8) scale(0.85 1)" font-family="Liberation Serif" font-weight="700" font-size="26" fill="#9fd2f2" opacity="0.95" text-anchor="middle">0</text><text x="0" y="0" transform="translate(1330.2 320.8) scale(0.85 1)" font-family="Liberation Serif" font-weight="700" font-size="26" fill="#9fd2f2" opacity="0.95" text-anchor="middle">0</text><text x="0" y="0" transform="translate(1345.7 320.8) scale(0.85 1)" font-family="Liberation Serif" font-weight="700" font-size="26" fill="#f2fbff" opacity="1.0" text-anchor="middle">0</text><text x="0" y="0" transform="translate(1360.5 320.8) scale(0.85 1)" font-family="Liberation Serif" font-weight="400" font-size="26" fill="#4f8fce" opacity="0.9" text-anchor="middle">0</text><text x="0" y="0" transform="translate(1375.0 320.8) scale(0.85 1)" font-family="Liberation Serif" font-weight="700" font-size="26" fill="#9fd2f2" opacity="0.95" text-anchor="middle">1</text><text x="0" y="0" transform="translate(1260.5 342.4) scale(0.85 1)" font-family="Liberation Serif" font-weight="400" font-size="26" fill="#4f8fce" opacity="0.9" text-anchor="middle">1</text><text x="0" y="0" transform="translate(1278.8 342.4) scale(0.85 1)" font-family="Liberation Serif" font-weight="400" font-size="26" fill="#4f8fce" opacity="0.9" text-anchor="middle">1</text><text x="0" y="0" transform="translate(1297.0 342.4) scale(0.85 1)" font-family="Liberation Serif" font-weight="400" font-size="26" fill="#4f8fce" opacity="0.9" text-anchor="middle">1</text><text x="0" y="0" transform="translate(1313.6 342.4) scale(0.85 1)" font-family="Liberation Serif" font-weight="700" font-size="26" fill="#f2fbff" opacity="1.0" text-anchor="middle">0</text><text x="0" y="0" transform="translate(1330.2 342.4) scale(0.85 1)" font-family="Liberation Serif" font-weight="700" font-size="26" fill="#9fd2f2" opacity="0.95" text-anchor="middle">0</text><text x="0" y="0" transform="translate(1345.7 342.4) scale(0.85 1)" font-family="Liberation Serif" font-weight="400" font-size="26" fill="#3a78be" opacity="0.7" text-anchor="middle" filter="url(#bb2)">0</text><text x="0" y="0" transform="translate(1360.5 342.4) scale(0.85 1)" font-family="Liberation Serif" font-weight="400" font-size="26" fill="#4f8fce" opacity="0.9" text-anchor="middle">1</text><text x="0" y="0" transform="translate(1375.0 342.4) scale(0.85 1)" font-family="Liberation Serif" font-weight="400" font-size="26" fill="#3a78be" opacity="0.7" text-anchor="middle" filter="url(#bb2)">1</text><text x="0" y="0" transform="translate(1278.8 362.3) scale(0.85 1)" font-family="Liberation Serif" font-weight="700" font-size="26" fill="#9fd2f2" opacity="0.95" text-anchor="middle">0</text><text x="0" y="0" transform="translate(1297.0 362.3) scale(0.85 1)" font-family="Liberation Serif" font-weight="400" font-size="26" fill="#4f8fce" opacity="0.9" text-anchor="middle">0</text><text x="0" y="0" transform="translate(1313.6 362.3) scale(0.85 1)" font-family="Liberation Serif" font-weight="700" font-size="26" fill="#9fd2f2" opacity="0.95" text-anchor="middle">0</text><text x="0" y="0" transform="translate(1330.2 362.3) scale(0.85 1)" font-family="Liberation Serif" font-weight="400" font-size="26" fill="#3a78be" opacity="0.7" text-anchor="middle" filter="url(#bb2)">0</text><text x="0" y="0" transform="translate(1345.7 362.3) scale(0.85 1)" font-family="Liberation Serif" font-weight="700" font-size="26" fill="#9fd2f2" opacity="0.95" text-anchor="middle">1</text><text x="0" y="0" transform="translate(1360.5 362.3) scale(0.85 1)" font-family="Liberation Serif" font-weight="400" font-size="26" fill="#4f8fce" opacity="0.9" text-anchor="middle">0</text><text x="0" y="0" transform="translate(1375.0 362.3) scale(0.85 1)" font-family="Liberation Serif" font-weight="700" font-size="26" fill="#f2fbff" opacity="1.0" text-anchor="middle">1</text><text x="0" y="0" transform="translate(1260.5 383.9) scale(0.85 1)" font-family="Liberation Serif" font-weight="400" font-size="26" fill="#3a78be" opacity="0.7" text-anchor="middle" filter="url(#bb2)">0</text><text x="0" y="0" transform="translate(1278.8 383.9) scale(0.85 1)" font-family="Liberation Serif" font-weight="400" font-size="26" fill="#4f8fce" opacity="0.9" text-anchor="middle">1</text><text x="0" y="0" transform="translate(1297.0 383.9) scale(0.85 1)" font-family="Liberation Serif" font-weight="700" font-size="26" fill="#f2fbff" opacity="1.0" text-anchor="middle">0</text><text x="0" y="0" transform="translate(1313.6 383.9) scale(0.85 1)" font-family="Liberation Serif" font-weight="400" font-size="26" fill="#4f8fce" opacity="0.9" text-anchor="middle">1</text><text x="0" y="0" transform="translate(1330.2 383.9) scale(0.85 1)" font-family="Liberation Serif" font-weight="700" font-size="26" fill="#9fd2f2" opacity="0.95" text-anchor="middle">0</text><text x="0" y="0" transform="translate(1345.7 383.9) scale(0.85 1)" font-family="Liberation Serif" font-weight="400" font-size="26" fill="#4f8fce" opacity="0.9" text-anchor="middle">0</text><text x="0" y="0" transform="translate(1360.5 383.9) scale(0.85 1)" font-family="Liberation Serif" font-weight="400" font-size="26" fill="#4f8fce" opacity="0.9" text-anchor="middle">1</text><text x="0" y="0" transform="translate(1260.5 405.4) scale(0.85 1)" font-family="Liberation Serif" font-weight="400" font-size="26" fill="#3a78be" opacity="0.7" text-anchor="middle" filter="url(#bb2)">0</text><text x="0" y="0" transform="translate(1278.8 405.4) scale(0.85 1)" font-family="Liberation Serif" font-weight="400" font-size="26" fill="#3a78be" opacity="0.7" text-anchor="middle" filter="url(#bb2)">0</text><text x="0" y="0" transform="translate(1297.0 405.4) scale(0.85 1)" font-family="Liberation Serif" font-weight="700" font-size="26" fill="#f2fbff" opacity="1.0" text-anchor="middle">1</text><text x="0" y="0" transform="translate(1313.6 405.4) scale(0.85 1)" font-family="Liberation Serif" font-weight="700" font-size="26" fill="#9fd2f2" opacity="0.95" text-anchor="middle">0</text><text x="0" y="0" transform="translate(1330.2 405.4) scale(0.85 1)" font-family="Liberation Serif" font-weight="700" font-size="26" fill="#9fd2f2" opacity="0.95" text-anchor="middle">1</text><text x="0" y="0" transform="translate(1345.7 405.4) scale(0.85 1)" font-family="Liberation Serif" font-weight="400" font-size="26" fill="#3a78be" opacity="0.7" text-anchor="middle" filter="url(#bb2)">0</text><text x="0" y="0" transform="translate(1360.5 405.4) scale(0.85 1)" font-family="Liberation Serif" font-weight="400" font-size="26" fill="#4f8fce" opacity="0.9" text-anchor="middle">1</text><text x="0" y="0" transform="translate(1297.0 425.3) scale(0.85 1)" font-family="Liberation Serif" font-weight="400" font-size="26" fill="#4f8fce" opacity="0.9" text-anchor="middle">1</text><text x="0" y="0" transform="translate(1313.6 425.3) scale(0.85 1)" font-family="Liberation Serif" font-weight="700" font-size="26" fill="#9fd2f2" opacity="0.95" text-anchor="middle">1</text><text x="0" y="0" transform="translate(1330.2 425.3) scale(0.85 1)" font-family="Liberation Serif" font-weight="400" font-size="26" fill="#4f8fce" opacity="0.9" text-anchor="middle">1</text><text x="0" y="0" transform="translate(1345.7 425.3) scale(0.85 1)" font-family="Liberation Serif" font-weight="700" font-size="26" fill="#f2fbff" opacity="1.0" text-anchor="middle">0</text><text x="0" y="0" transform="translate(1360.5 425.3) scale(0.85 1)" font-family="Liberation Serif" font-weight="400" font-size="26" fill="#3a78be" opacity="0.7" text-anchor="middle" filter="url(#bb2)">1</text><g opacity="0.12"><line x1="1290" y1="215" x2="1380" y2="215" stroke="#000" stroke-width="1"/><line x1="1290" y1="218" x2="1380" y2="218" stroke="#000" stroke-width="1"/><line x1="1290" y1="221" x2="1380" y2="221" stroke="#000" stroke-width="1"/><line x1="1290" y1="224" x2="1380" y2="224" stroke="#000" stroke-width="1"/><line x1="1290" y1="227" x2="1380" y2="227" stroke="#000" stroke-width="1"/><line x1="1290" y1="230" x2="1380" y2="230" stroke="#000" stroke-width="1"/><line x1="1290" y1="233" x2="1380" y2="233" stroke="#000" stroke-width="1"/><line x1="1290" y1="236" x2="1380" y2="236" stroke="#000" stroke-width="1"/><line x1="1290" y1="239" x2="1380" y2="239" stroke="#000" stroke-width="1"/><line x1="1290" y1="242" x2="1380" y2="242" stroke="#000" stroke-width="1"/><line x1="1290" y1="245" x2="1380" y2="245" stroke="#000" stroke-width="1"/><line x1="1290" y1="248" x2="1380" y2="248" stroke="#000" stroke-width="1"/><line x1="1290" y1="251" x2="1380" y2="251" stroke="#000" stroke-width="1"/><line x1="1290" y1="254" x2="1380" y2="254" stroke="#000" stroke-width="1"/><line x1="1290" y1="257" x2="1380" y2="257" stroke="#000" stroke-width="1"/><line x1="1290" y1="260" x2="1380" y2="260" stroke="#000" stroke-width="1"/><line x1="1290" y1="263" x2="1380" y2="263" stroke="#000" stroke-width="1"/><line x1="1290" y1="266" x2="1380" y2="266" stroke="#000" stroke-width="1"/><line x1="1290" y1="269" x2="1380" y2="269" stroke="#000" stroke-width="1"/><line x1="1290" y1="272" x2="1380" y2="272" stroke="#000" stroke-width="1"/><line x1="1290" y1="275" x2="1380" y2="275" stroke="#000" stroke-width="1"/><line x1="1290" y1="278" x2="1380" y2="278" stroke="#000" stroke-width="1"/><line x1="1290" y1="281" x2="1380" y2="281" stroke="#000" stroke-width="1"/><line x1="1290" y1="284" x2="1380" y2="284" stroke="#000" stroke-width="1"/><line x1="1290" y1="287" x2="1380" y2="287" stroke="#000" stroke-width="1"/><line x1="1290" y1="290" x2="1380" y2="290" stroke="#000" stroke-width="1"/><line x1="1290" y1="293" x2="1380" y2="293" stroke="#000" stroke-width="1"/><line x1="1290" y1="296" x2="1380" y2="296" stroke="#000" stroke-width="1"/><line x1="1290" y1="299" x2="1380" y2="299" stroke="#000" stroke-width="1"/><line x1="1290" y1="302" x2="1380" y2="302" stroke="#000" stroke-width="1"/><line x1="1290" y1="305" x2="1380" y2="305" stroke="#000" stroke-width="1"/><line x1="1290" y1="308" x2="1380" y2="308" stroke="#000" stroke-width="1"/><line x1="1290" y1="311" x2="1380" y2="311" stroke="#000" stroke-width="1"/><line x1="1290" y1="314" x2="1380" y2="314" stroke="#000" stroke-width="1"/><line x1="1290" y1="317" x2="1380" y2="317" stroke="#000" stroke-width="1"/><line x1="1290" y1="320" x2="1380" y2="320" stroke="#000" stroke-width="1"/><line x1="1290" y1="323" x2="1380" y2="323" stroke="#000" stroke-width="1"/><line x1="1290" y1="326" x2="1380" y2="326" stroke="#000" stroke-width="1"/><line x1="1290" y1="329" x2="1380" y2="329" stroke="#000" stroke-width="1"/><line x1="1290" y1="332" x2="1380" y2="332" stroke="#000" stroke-width="1"/><line x1="1290" y1="335" x2="1380" y2="335" stroke="#000" stroke-width="1"/><line x1="1290" y1="338" x2="1380" y2="338" stroke="#000" stroke-width="1"/><line x1="1290" y1="341" x2="1380" y2="341" stroke="#000" stroke-width="1"/><line x1="1290" y1="344" x2="1380" y2="344" stroke="#000" stroke-width="1"/><line x1="1290" y1="347" x2="1380" y2="347" stroke="#000" stroke-width="1"/><line x1="1290" y1="350" x2="1380" y2="350" stroke="#000" stroke-width="1"/><line x1="1290" y1="353" x2="1380" y2="353" stroke="#000" stroke-width="1"/><line x1="1290" y1="356" x2="1380" y2="356" stroke="#000" stroke-width="1"/><line x1="1290" y1="359" x2="1380" y2="359" stroke="#000" stroke-width="1"/><line x1="1290" y1="362" x2="1380" y2="362" stroke="#000" stroke-width="1"/><line x1="1290" y1="365" x2="1380" y2="365" stroke="#000" stroke-width="1"/><line x1="1290" y1="368" x2="1380" y2="368" stroke="#000" stroke-width="1"/><line x1="1290" y1="371" x2="1380" y2="371" stroke="#000" stroke-width="1"/><line x1="1290" y1="374" x2="1380" y2="374" stroke="#000" stroke-width="1"/><line x1="1290" y1="377" x2="1380" y2="377" stroke="#000" stroke-width="1"/><line x1="1290" y1="380" x2="1380" y2="380" stroke="#000" stroke-width="1"/><line x1="1290" y1="383" x2="1380" y2="383" stroke="#000" stroke-width="1"/><line x1="1290" y1="386" x2="1380" y2="386" stroke="#000" stroke-width="1"/><line x1="1290" y1="389" x2="1380" y2="389" stroke="#000" stroke-width="1"/><line x1="1290" y1="392" x2="1380" y2="392" stroke="#000" stroke-width="1"/><line x1="1290" y1="395" x2="1380" y2="395" stroke="#000" stroke-width="1"/><line x1="1290" y1="398" x2="1380" y2="398" stroke="#000" stroke-width="1"/><line x1="1290" y1="401" x2="1380" y2="401" stroke="#000" stroke-width="1"/><line x1="1290" y1="404" x2="1380" y2="404" stroke="#000" stroke-width="1"/><line x1="1290" y1="407" x2="1380" y2="407" stroke="#000" stroke-width="1"/><line x1="1290" y1="410" x2="1380" y2="410" stroke="#000" stroke-width="1"/><line x1="1290" y1="413" x2="1380" y2="413" stroke="#000" stroke-width="1"/><line x1="1290" y1="416" x2="1380" y2="416" stroke="#000" stroke-width="1"/><line x1="1290" y1="419" x2="1380" y2="419" stroke="#000" stroke-width="1"/><line x1="1290" y1="422" x2="1380" y2="422" stroke="#000" stroke-width="1"/></g></svg>
<div class="btn" style="left:1500.7px;top:406px;width:78.3px"></div>
<div class="t" style="left:1522.60px;top:416.21px;font-size:15.4px;color:#eaf5ee;font-weight:400;letter-spacing:-0.235px;-webkit-text-stroke:0.08px currentColor;">View</div>
<div class="t" style="left:1244.00px;top:454.22px;font-size:20.8px;color:#111;font-weight:700;letter-spacing:0.3px;">EduPred</div>
<svg class="a" style="left:1245.00px;top:487.80px" width="17" height="17" viewBox="0 0 17 17"><path transform="scale(1.0625)" d="M8 0C3.58 0 0 3.58 0 8c0 3.54 2.29 6.53 5.47 7.59.4.07.55-.17.55-.38 0-.19-.01-.82-.01-1.49-2.01.37-2.53-.49-2.69-.94-.09-.23-.48-.94-.82-1.13-.28-.15-.68-.52-.01-.53.63-.01 1.08.58 1.23.82.72 1.21 1.87.87 2.33.66.07-.52.28-.87.51-1.07-1.78-.2-3.64-.89-3.64-3.95 0-.87.31-1.59.82-2.15-.08-.2-.36-1.02.08-2.12 0 0 .67-.21 2.2.82.64-.18 1.32-.27 2-.27.68 0 1.36.09 2 .27 1.53-1.04 2.2-.82 2.2-.82.44 1.1.16 1.92.08 2.12.51.56.82 1.27.82 2.15 0 3.07-1.87 3.75-3.65 3.95.29.25.54.73.54 1.48 0 1.07-.01 1.93-.01 2.2 0 .21.15.46.55.38A8.013 8.013 0 0016 8c0-4.42-3.58-8-8-8z" fill="#111"/></svg>
<div class="t" style="left:1271.70px;top:491.29px;font-size:16.6px;color:#2a2a2a;font-weight:400;letter-spacing:0.74px;">Github</div>
<div class="t" style="left:1245.00px;top:521.19px;font-size:16.6px;color:#858585;font-weight:400;letter-spacing:0.741px;">#education, #machine-learning</div>
<svg class="a" style="left:1245.00px;top:581.45px" width="17.5" height="17.5" viewBox="0 0 17.5 17.5"><rect x="0.8" y="0.8" width="15.9" height="15.9" rx="1.6" fill="none" stroke="#333" stroke-width="1.2"/><path d="M7.3 6.0 L4.8 8.7 L7.3 11.4 M10.3 6.0 L12.8 8.7 L10.3 11.4" fill="none" stroke="#333" stroke-width="1.1"/></svg>
<div class="t" style="left:1271.70px;top:583.89px;font-size:16.6px;color:#2a2a2a;font-weight:400;letter-spacing:0.657px;">Code repository</div>
<div class="t" style="left:1244.00px;top:617.40px;font-size:13.3px;color:#333;font-weight:400;letter-spacing:0.44px;-webkit-text-stroke:0.08px currentColor;">Used in 1 project</div>
<div class="t" style="left:1245.00px;top:643.50px;font-size:13.3px;color:#333;font-weight:400;letter-spacing:0.608px;-webkit-text-stroke:0.08px currentColor;">Created 5 months ago</div>
<div class="card" style="left:397px;top:711px"></div>
<svg class="a" style="left:497px;top:735px" width="160" height="145" viewBox="497 735 160 145"><defs><linearGradient id="zg397" x1="0" y1="0" x2="1" y2="0"><stop offset="0" stop-color="#2457b5"/><stop offset="0.5" stop-color="#3a7dcf"/><stop offset="1" stop-color="#50a4ea"/></linearGradient></defs><g transform="translate(-0.00 0)"><ellipse cx="574" cy="810" rx="50" ry="41" fill="none" stroke="#3b9f4a" stroke-width="10" transform="rotate(12 574 810)"/><ellipse cx="569" cy="809" rx="46" ry="39" fill="none" stroke="#f0a032" stroke-width="10" transform="rotate(-12 569 809)"/><ellipse cx="587" cy="812" rx="45" ry="43" fill="none" stroke="#3f8ed6" stroke-width="9" transform="rotate(-28 587 812)"/><ellipse cx="593" cy="808" rx="19" ry="57" fill="none" stroke="#f6d63f" stroke-width="10" transform="rotate(10 593 808)"/><ellipse cx="588" cy="800" rx="20" ry="55" fill="none" stroke="#c5297d" stroke-width="10" transform="rotate(-30 588 800)"/></g><rect x="510.9" y="782.6" width="128.6" height="51.6" fill="url(#zg397)"/><text x="0" y="0" transform="translate(532.6 820.6) scale(0.7 1)" font-family="Liberation Sans" font-size="38" letter-spacing="-1.8" fill="#fff">zenodo</text></svg>
<div class="btn" style="left:633.5px;top:902px;width:114.4px"></div>
<svg class="a" style="left:654.4px;top:910px" width="14" height="18" viewBox="0 0 14 18"><path d="M0.8 1.6 L13 9 L0.8 16.4 Z" fill="#fff"/></svg>
<div class="t" style="left:674.20px;top:912.21px;font-size:15.4px;color:#eaf5ee;font-weight:400;letter-spacing:0.067px;-webkit-text-stroke:0.08px currentColor;">Inspect</div>
<div class="t" style="left:412.00px;top:950.22px;font-size:20.8px;color:#111;font-weight:700;letter-spacing:0.506px;">SES-Education Attainment</div>
<div class="t" style="left:411.40px;top:987.29px;font-size:16.6px;color:#2a2a2a;font-weight:400;letter-spacing:0.98px;">Zenodo</div>
<div class="t" style="left:412.00px;top:1017.19px;font-size:16.6px;color:#858585;font-weight:400;letter-spacing:0.782px;">#education, #anonymized</div>
<svg class="a" style="left:411.70px;top:1070.50px" width="15" height="18" viewBox="0 0 15 18"><ellipse cx="7.2" cy="3.2" rx="6.0" ry="2.5" fill="none" stroke="#2c2f6e" stroke-width="1.2"/><path d="M1.2 3.2 V14 c0 1.4 2.7 2.5 6 2.5 s6-1.1 6-2.5 V3.2" fill="none" stroke="#2c2f6e" stroke-width="1.2"/><path d="M1.2 6.8 c0 1.4 2.7 2.5 6 2.5 s6-1.1 6-2.5 M1.2 10.4 c0 1.4 2.7 2.5 6 2.5 s6-1.1 6-2.5" fill="none" stroke="#2c2f6e" stroke-width="1.2"/></svg>
<div class="t" style="left:434.80px;top:1073.39px;font-size:16.6px;color:#2a2a2a;font-weight:400;letter-spacing:0.68px;">Data source</div>
<div class="t" style="left:411.00px;top:1108.19px;font-size:13.3px;color:#333;font-weight:400;letter-spacing:0.653px;-webkit-text-stroke:0.08px currentColor;">Used in 3 projects</div>
<div class="t" style="left:412.00px;top:1133.89px;font-size:13.3px;color:#333;font-weight:400;letter-spacing:0.641px;-webkit-text-stroke:0.08px currentColor;">Created 8 months ago</div>
<div class="card" style="left:814px;top:711px"></div>
<svg class="a" style="left:920px;top:738px" width="154" height="153" viewBox="920 738 154 153"><rect x="923.6" y="741.3" width="73.0" height="73.0" fill="#a56586"/><rect x="996.6" y="741.3" width="73.39999999999998" height="73.0" fill="#f1bb42"/><rect x="923.6" y="814.3" width="73.0" height="72.70000000000005" fill="#d46b7c"/><rect x="996.6" y="814.3" width="73.39999999999998" height="72.70000000000005" fill="#d95e38"/><line x1="996.6" y1="741.3" x2="996.6" y2="887.0" stroke="#fff" stroke-width="3"/><line x1="923.6" y1="814.3" x2="1070.0" y2="814.3" stroke="#fff" stroke-width="3"/><g transform="translate(996.6 778.2) rotate(0) scale(0.95)"><path d="M 0 -7 C 0 -4, -2 -3.2, -4.2 -3.6 C -7 -4.2, -9 -9.6, -15.5 -9.6 C -21.5 -9.6, -25.5 -5, -25.5 0 C -25.5 5, -21.5 9.6, -15.5 9.6 C -9 9.6, -7 4.2, -4.2 3.6 C -2 3.2, 0 4, 0 7 Z" fill="#f1bb42"/><rect x="-2.2" y="-6" width="4.4" height="12" fill="#f1bb42"/><path d="M 0 -7 C 0 -4, -2 -3.2, -4.2 -3.6 C -7 -4.2, -9 -9.6, -15.5 -9.6 C -21.5 -9.6, -25.5 -5, -25.5 0 C -25.5 5, -21.5 9.6, -15.5 9.6 C -9 9.6, -7 4.2, -4.2 3.6 C -2 3.2, 0 4, 0 7" fill="none" stroke="#fff" stroke-width="2.6"/></g><g transform="translate(996.6 850.8) rotate(0) scale(0.95)"><path d="M 0 -7 C 0 -4, -2 -3.2, -4.2 -3.6 C -7 -4.2, -9 -9.6, -15.5 -9.6 C -21.5 -9.6, -25.5 -5, -25.5 0 C -25.5 5, -21.5 9.6, -15.5 9.6 C -9 9.6, -7 4.2, -4.2 3.6 C -2 3.2, 0 4, 0 7 Z" fill="#d95e38"/><rect x="-2.2" y="-6" width="4.4" height="12" fill="#d95e38"/><path d="M 0 -7 C 0 -4, -2 -3.2, -4.2 -3.6 C -7 -4.2, -9 -9.6, -15.5 -9.6 C -21.5 -9.6, -25.5 -5, -25.5 0 C -25.5 5, -21.5 9.6, -15.5 9.6 C -9 9.6, -7 4.2, -4.2 3.6 C -2 3.2, 0 4, 0 7" fill="none" stroke="#fff" stroke-width="2.6"/></g><g transform="translate(960 814.3) rotate(90) scale(0.95)"><path d="M 0 -7 C 0 -4, -2 -3.2, -4.2 -3.6 C -7 -4.2, -9 -9.6, -15.5 -9.6 C -21.5 -9.6, -25.5 -5, -25.5 0 C -25.5 5, -21.5 9.6, -15.5 9.6 C -9 9.6, -7 4.2, -4.2 3.6 C -2 3.2, 0 4, 0 7 Z" fill="#d46b7c"/><rect x="-2.2" y="-6" width="4.4" height="12" fill="#d46b7c"/><path d="M 0 -7 C 0 -4, -2 -3.2, -4.2 -3.6 C -7 -4.2, -9 -9.6, -15.5 -9.6 C -21.5 -9.6, -25.5 -5, -25.5 0 C -25.5 5, -21.5 9.6, -15.5 9.6 C -9 9.6, -7 4.2, -4.2 3.6 C -2 3.2, 0 4, 0 7" fill="none" stroke="#fff" stroke-width="2.6"/></g><g transform="translate(1033.4 814.3) rotate(-90) scale(0.95)"><path d="M 0 -7 C 0 -4, -2 -3.2, -4.2 -3.6 C -7 -4.2, -9 -9.6, -15.5 -9.6 C -21.5 -9.6, -25.5 -5, -25.5 0 C -25.5 5, -21.5 9.6, -15.5 9.6 C -9 9.6, -7 4.2, -4.2 3.6 C -2 3.2, 0 4, 0 7 Z" fill="#f1bb42"/><rect x="-2.2" y="-6" width="4.4" height="12" fill="#f1bb42"/><path d="M 0 -7 C 0 -4, -2 -3.2, -4.2 -3.6 C -7 -4.2, -9 -9.6, -15.5 -9.6 C -21.5 -9.6, -25.5 -5, -25.5 0 C -25.5 5, -21.5 9.6, -15.5 9.6 C -9 9.6, -7 4.2, -4.2 3.6 C -2 3.2, 0 4, 0 7" fill="none" stroke="#fff" stroke-width="2.6"/></g></svg>
<div class="btn" style="left:1067.6px;top:902px;width:90.2px"></div>
<svg class="a" style="left:1088.3px;top:910px" width="14" height="18" viewBox="0 0 14 18"><path d="M0.8 1.6 L13 9 L0.8 16.4 Z" fill="#fff"/></svg>
<div class="t" style="left:1108.50px;top:912.21px;font-size:15.4px;color:#eaf5ee;font-weight:400;letter-spacing:-0.8px;-webkit-text-stroke:0.08px currentColor;">Run</div>
<div class="t" style="left:828.00px;top:950.22px;font-size:20.8px;color:#111;font-weight:700;letter-spacing:0.286px;">Multimodal Learning Env</div>
<svg class="a" style="left:829.00px;top:983.30px" width="13" height="18" viewBox="0 0 13 18"><rect x="0.8" y="0.8" width="11" height="16.6" rx="0.8" fill="none" stroke="#222" stroke-width="1.3"/><rect x="2.6" y="2.8" width="1.9" height="1.8" fill="#222"/><rect x="2.6" y="5.7" width="1.9" height="1.8" fill="#222"/><rect x="2.6" y="8.6" width="1.9" height="1.8" fill="#222"/><rect x="2.6" y="11.5" width="1.9" height="1.8" fill="#222"/><rect x="5.6" y="2.8" width="1.9" height="1.8" fill="#222"/><rect x="5.6" y="5.7" width="1.9" height="1.8" fill="#222"/><rect x="5.6" y="8.6" width="1.9" height="1.8" fill="#222"/><rect x="5.6" y="11.5" width="1.9" height="1.8" fill="#222"/><rect x="8.6" y="2.8" width="1.9" height="1.8" fill="#222"/><rect x="8.6" y="5.7" width="1.9" height="1.8" fill="#222"/><rect x="8.6" y="8.6" width="1.9" height="1.8" fill="#222"/><rect x="8.6" y="11.5" width="1.9" height="1.8" fill="#222"/><rect x="4.6" y="14.2" width="3.4" height="3" fill="#222"/></svg>
<div class="t" style="left:853.30px;top:987.29px;font-size:16.6px;color:#2a2a2a;font-weight:400;letter-spacing:0.583px;">Alderidge University</div>
<div class="t" style="left:829.00px;top:1017.19px;font-size:16.6px;color:#858585;font-weight:400;letter-spacing:0.876px;">#python, #pytorch, #plotly</div>
<svg class="a" style="left:827.50px;top:1069.00px" width="22" height="19" viewBox="0 0 22 19"><path d="M10.7 1.0 L18.6 4.2 L10.7 7.6 L2.8 4.2 Z" fill="none" stroke="#333" stroke-width="1.15" stroke-linejoin="round"/><path d="M2.8 4.2 L0.9 7.4 L8.7 10.8 L10.7 7.6 L12.7 10.8 L20.5 7.4 L18.6 4.2" fill="none" stroke="#333" stroke-width="1.15" stroke-linejoin="round"/><path d="M2.7 8.2 V13.9 L10.7 17.6 L18.7 13.9 V8.2 M10.7 7.6 V17.6" fill="none" stroke="#333" stroke-width="1.15" stroke-linejoin="round"/></svg>
<div class="t" style="left:853.40px;top:1073.39px;font-size:16.6px;color:#2a2a2a;font-weight:400;letter-spacing:0.62px;">Environment</div>
<div class="t" style="left:828.00px;top:1108.29px;font-size:13.3px;color:#333;font-weight:400;letter-spacing:0.594px;-webkit-text-stroke:0.08px currentColor;">Used in 7 projects</div>
<div class="t" style="left:829.00px;top:1134.39px;font-size:13.3px;color:#333;font-weight:400;letter-spacing:0.61px;-webkit-text-stroke:0.08px currentColor;">Created 10 months ago</div>
<div class="card" style="left:1230px;top:711px"></div>
<svg class="a" style="left:1330px;top:735px" width="160" height="145" viewBox="1330 735 160 145"><defs><linearGradient id="zg1230" x1="0" y1="0" x2="1" y2="0"><stop offset="0" stop-color="#2457b5"/><stop offset="0.5" stop-color="#3a7dcf"/><stop offset="1" stop-color="#50a4ea"/></linearGradient></defs><g transform="translate(833.45 0)"><ellipse cx="574" cy="810" rx="50" ry="41" fill="none" stroke="#3b9f4a" stroke-width="10" transform="rotate(12 574 810)"/><ellipse cx="569" cy="809" rx="46" ry="39" fill="none" stroke="#f0a032" stroke-width="10" transform="rotate(-12 569 809)"/><ellipse cx="587" cy="812" rx="45" ry="43" fill="none" stroke="#3f8ed6" stroke-width="9" transform="rotate(-28 587 812)"/><ellipse cx="593" cy="808" rx="19" ry="57" fill="none" stroke="#f6d63f" stroke-width="10" transform="rotate(10 593 808)"/><ellipse cx="588" cy="800" rx="20" ry="55" fill="none" stroke="#c5297d" stroke-width="10" transform="rotate(-30 588 800)"/></g><rect x="1344.3" y="782.6" width="128.7" height="51.6" fill="url(#zg1230)"/><text x="0" y="0" transform="translate(1366.0 820.6) scale(0.7 1)" font-family="Liberation Sans" font-size="38" letter-spacing="-1.8" fill="#fff">zenodo</text></svg>
<div class="btn" style="left:1466.7px;top:902px;width:114.5px"></div>
<svg class="a" style="left:1487.4px;top:910px" width="14" height="18" viewBox="0 0 14 18"><path d="M0.8 1.6 L13 9 L0.8 16.4 Z" fill="#fff"/></svg>
<div class="t" style="left:1507.70px;top:912.21px;font-size:15.4px;color:#eaf5ee;font-weight:400;letter-spacing:0.201px;-webkit-text-stroke:0.08px currentColor;">Inspect</div>
<div class="t" style="left:1245.00px;top:950.22px;font-size:20.8px;color:#111;font-weight:700;letter-spacing:0.354px;">SocioEduFactors Dataset</div>
<div class="t" style="left:1246.50px;top:987.29px;font-size:16.6px;color:#2a2a2a;font-weight:400;letter-spacing:-0.3px;">S3</div>
<div class="t" style="left:1245.00px;top:1017.19px;font-size:16.6px;color:#858585;font-weight:400;letter-spacing:0.988px;">#education</div>
<svg class="a" style="left:1244.70px;top:1070.50px" width="15" height="18" viewBox="0 0 15 18"><ellipse cx="7.2" cy="3.2" rx="6.0" ry="2.5" fill="none" stroke="#2c2f6e" stroke-width="1.2"/><path d="M1.2 3.2 V14 c0 1.4 2.7 2.5 6 2.5 s6-1.1 6-2.5 V3.2" fill="none" stroke="#2c2f6e" stroke-width="1.2"/><path d="M1.2 6.8 c0 1.4 2.7 2.5 6 2.5 s6-1.1 6-2.5 M1.2 10.4 c0 1.4 2.7 2.5 6 2.5 s6-1.1 6-2.5" fill="none" stroke="#2c2f6e" stroke-width="1.2"/></svg>
<div class="t" style="left:1268.40px;top:1073.39px;font-size:16.6px;color:#2a2a2a;font-weight:400;letter-spacing:0.66px;">Data source</div>
<div class="t" style="left:1244.00px;top:1108.29px;font-size:13.3px;color:#333;font-weight:400;letter-spacing:0.469px;-webkit-text-stroke:0.08px currentColor;">Used in 1 projects</div>
<div class="t" style="left:1245.00px;top:1134.19px;font-size:13.3px;color:#333;font-weight:400;letter-spacing:0.628px;-webkit-text-stroke:0.08px currentColor;">Created 9 months ago</div></body></html>
